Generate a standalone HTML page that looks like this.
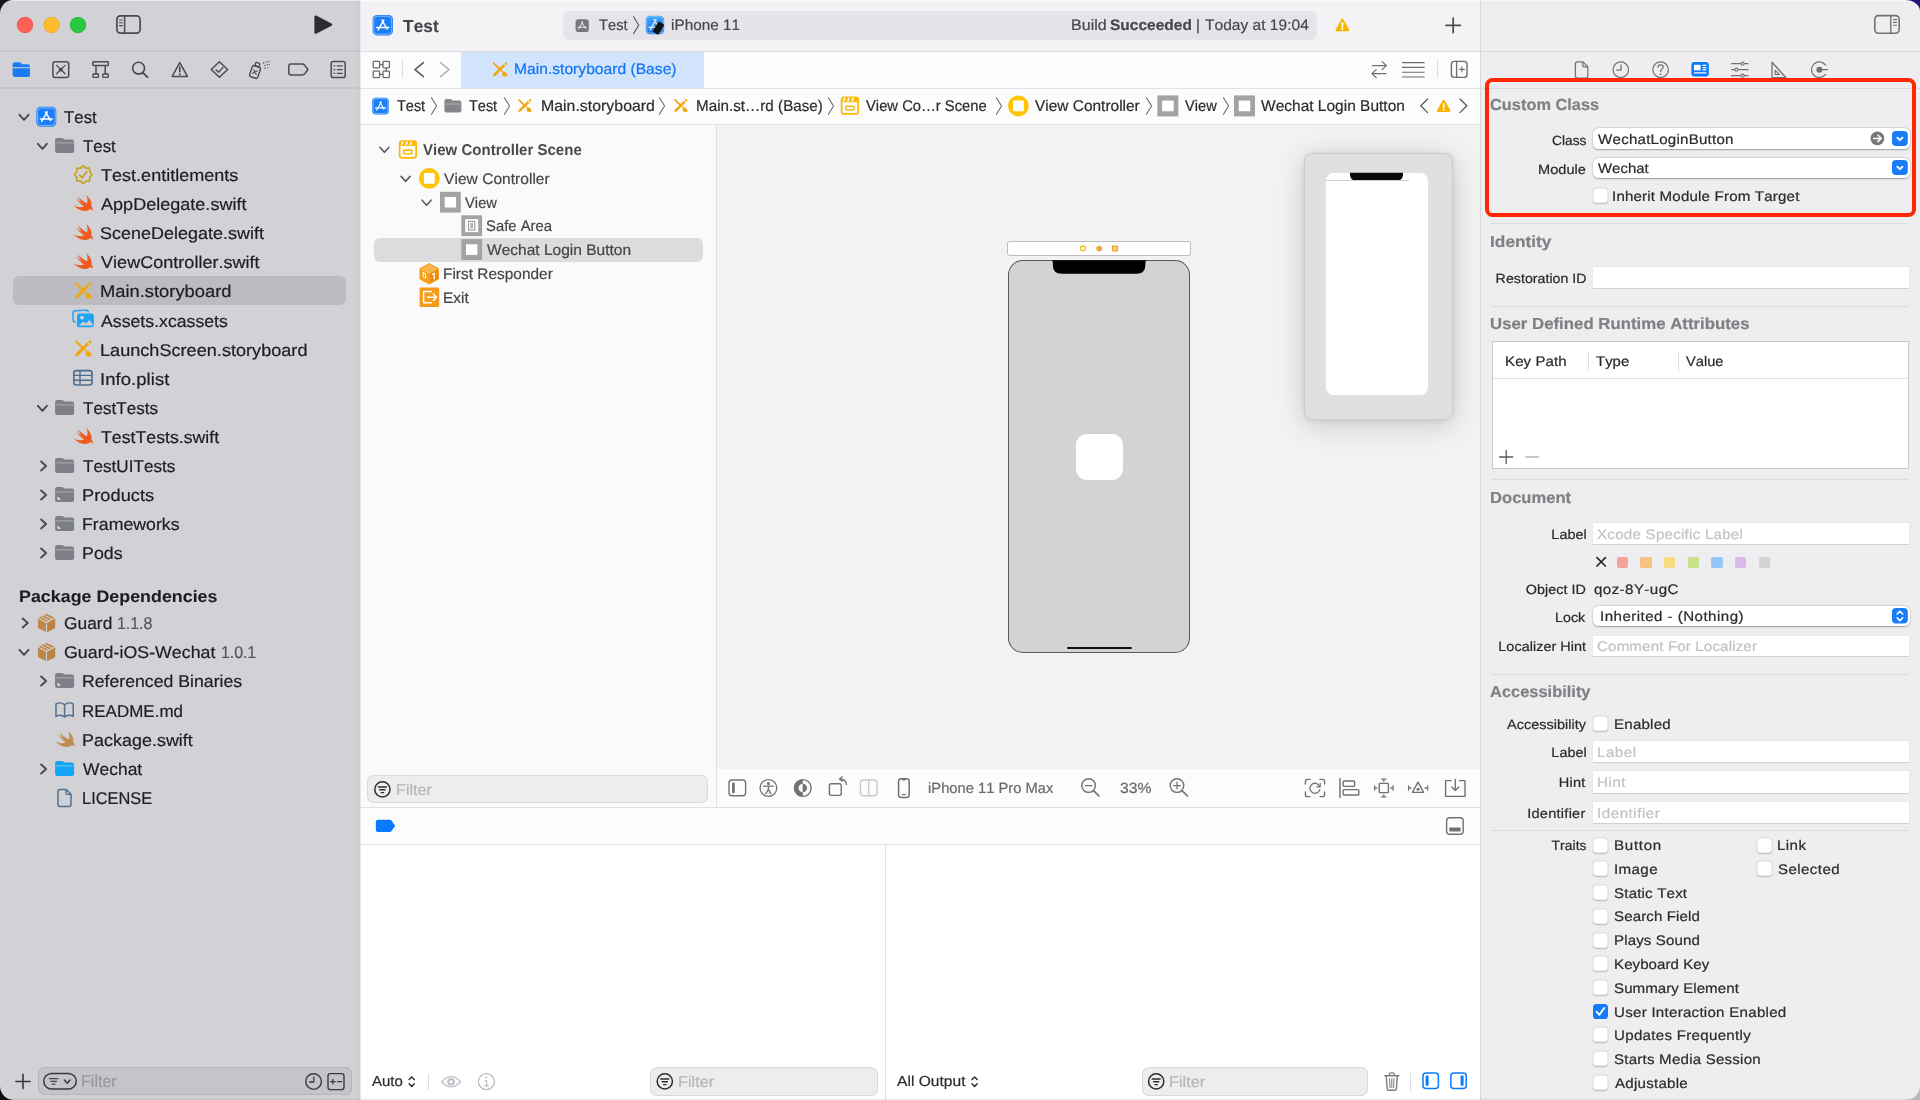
<!DOCTYPE html>
<html lang="en"><head><meta charset="utf-8"><title>Test — Main.storyboard</title>
<style>
html,body{margin:0;padding:0;}
body{width:1920px;height:1100px;overflow:hidden;position:relative;background:#fff;font-family:"Liberation Sans", sans-serif;}
#win{position:absolute;left:0;top:0;width:1920px;height:1100px;overflow:hidden;}
#win div,#win svg,#win span,.g{position:absolute;}
.g{left:0;top:0;width:0;height:0;}
#win svg{overflow:visible;}
.t{white-space:pre;font-kerning:none;height:40px;line-height:40px;transform-origin:0 50%;-webkit-text-stroke:0.2px currentColor;}
.r{transform-origin:100% 50%;}
.txl{left:0;top:0;width:1920px;height:1100px;will-change:transform;}
</style></head><body><div id="win">
<div id="chrome" class="g" aria-label="Window panels">
<div style="left:0px;top:0px;width:360px;height:1100px;background:#d2d1d6;"></div>
<div style="left:0px;top:50px;width:360px;height:1.7px;background:#c6c5ca;"></div>
<div style="left:0px;top:87.4px;width:360px;height:1.7px;background:#c6c5ca;"></div>
<div style="left:356px;top:0px;width:3px;height:1100px;background:linear-gradient(90deg,rgba(0,0,0,0),rgba(0,0,0,0.03));"></div>
<div style="left:359px;top:0px;width:1px;height:1100px;background:#cecdd2;"></div>
<div style="left:360px;top:0px;width:1px;height:1100px;background:#e6e5e9;"></div>
<div style="left:361px;top:0px;width:1119px;height:51px;background:#f3f2f5;"></div>
<div style="left:361px;top:51px;width:1119px;height:1px;background:#dddce0;"></div>
<div style="left:361px;top:52px;width:1119px;height:36px;background:#fcfcfc;"></div>
<div style="left:361px;top:88px;width:1119px;height:1px;background:#e2e2e4;"></div>
<div style="left:361px;top:89px;width:1119px;height:35px;background:#fcfcfc;"></div>
<div style="left:361px;top:124px;width:1119px;height:1px;background:#e2e2e4;"></div>
<div style="left:361px;top:125px;width:355px;height:682px;background:#fafafa;"></div>
<div style="left:716px;top:125px;width:1px;height:682px;background:#e0e0e2;"></div>
<div style="left:717px;top:125px;width:763px;height:643.5px;background:#f2f2f2;"></div>
<div style="left:717px;top:768.5px;width:763px;height:38.5px;background:#fcfcfc;"></div>
<div style="left:361px;top:807px;width:1119px;height:1px;background:#e0e0e2;"></div>
<div style="left:361px;top:808px;width:1119px;height:36px;background:#fcfcfc;"></div>
<div style="left:361px;top:844px;width:1119px;height:1px;background:#e0e0e2;"></div>
<div style="left:361px;top:845px;width:1119px;height:255px;background:#ffffff;"></div>
<div style="left:885px;top:845px;width:1px;height:255px;background:#e0e0e2;"></div>
<div style="left:1480px;top:0px;width:440px;height:1100px;background:#eeeef0;"></div>
<div style="left:1480px;top:0px;width:1px;height:1100px;background:#d6d6d9;"></div>
<div style="left:1481px;top:51px;width:439px;height:1px;background:#d9d9dc;"></div>
<div style="left:1481px;top:88px;width:439px;height:1px;background:#dadadd;"></div>
</div>
<aside id="navigator" class="g" aria-label="Project navigator">
<svg style="left:14px;top:14px" width="76" height="22" viewBox="14 14 76 22"><circle cx="25" cy="25" r="8" fill="#ff5f57"/><circle cx="25" cy="25" r="7.75" fill="none" stroke="#e0443e" stroke-width="0.5"/><circle cx="51.6" cy="25" r="8" fill="#febc2e"/><circle cx="51.6" cy="25" r="7.75" fill="none" stroke="#dea123" stroke-width="0.5"/><circle cx="78" cy="25" r="8" fill="#28c840"/><circle cx="78" cy="25" r="7.75" fill="none" stroke="#1aab29" stroke-width="0.5"/></svg>
<svg style="left:114px;top:13px" width="29" height="23" viewBox="114 13 29 23"><rect x="116.9" y="15.9" width="23.2" height="17.2" rx="3.6" fill="none" stroke="#4b4b4f" stroke-width="1.7"/><path d="M124.6 16 V33" stroke="#4b4b4f" stroke-width="1.5"/><path d="M119.4 20 h3 M119.4 22.8 h3 M119.4 25.6 h3" stroke="#4b4b4f" stroke-width="1.1" stroke-linecap="round"/></svg>
<svg style="left:312px;top:13px" width="23" height="23" viewBox="312 13 23 23"><path d="M315.6 16.6 L331 24.6 L315.6 32.6 Z" fill="#2d2d30" stroke="#2d2d30" stroke-width="2.4" stroke-linejoin="round"/></svg>
<svg style="left:10px;top:59px" width="23" height="21" viewBox="10 59 23 21"><path d="M12.6 64.4 q0 -2.2 2.2 -2.2 h4.2 q1.1 0 1.9 .8 l1.2 1.2 h5.7 q2.2 0 2.2 2.2 v0.8 h-17.4 z" fill="#1a7bf4"/><path d="M12.6 68.2 h17.4 v6.6 q0 2.2 -2.2 2.2 h-13 q-2.2 0 -2.2 -2.2 z" fill="#1a7bf4"/></svg>
<svg style="left:50px;top:59px" width="22" height="22" viewBox="50 59 22 22"><rect x="52.9" y="61.7" width="15.8" height="15.8" rx="2.2" fill="none" stroke="#4b4b4f" stroke-width="1.5"/><path d="M56.6 65.4 l8.4 8.4 M65 65.4 l-8.4 8.4" stroke="#4b4b4f" stroke-width="1.3" stroke-linecap="round"/><circle cx="60.8" cy="69.6" r="1.9" fill="#4b4b4f"/></svg>
<svg style="left:90px;top:59px" width="22" height="22" viewBox="90 59 22 22"><rect x="92.8" y="61.8" width="15.6" height="3.6" rx="0.8" fill="none" stroke="#4b4b4f" stroke-width="1.5"/><path d="M96 65.6 V74 M105.2 65.6 V74" stroke="#4b4b4f" stroke-width="1.5"/><rect x="93" y="74" width="5.4" height="3.4" rx="0.6" fill="none" stroke="#4b4b4f" stroke-width="1.4"/><rect x="102.8" y="74" width="5.4" height="3.4" rx="0.6" fill="none" stroke="#4b4b4f" stroke-width="1.4"/></svg>
<svg style="left:130px;top:59px" width="21" height="21" viewBox="130 59 21 21"><circle cx="138.6" cy="68.2" r="5.9" fill="none" stroke="#4b4b4f" stroke-width="1.6"/><path d="M143 72.8 L147.4 77.2" stroke="#4b4b4f" stroke-width="1.9" stroke-linecap="round"/></svg>
<svg style="left:169px;top:59px" width="22" height="21" viewBox="169 59 22 21"><path d="M179.8 62.6 L187.4 76.4 H172.2 Z" fill="none" stroke="#4b4b4f" stroke-width="1.5" stroke-linejoin="round"/><path d="M179.8 67 V71.8" stroke="#4b4b4f" stroke-width="1.6" stroke-linecap="round"/><circle cx="179.8" cy="74.2" r="0.95" fill="#4b4b4f"/></svg>
<svg style="left:208px;top:59px" width="23" height="22" viewBox="208 59 23 22"><path d="M219.4 61.8 L227.6 69.5 L219.4 77.2 L211.2 69.5 Z" fill="none" stroke="#4b4b4f" stroke-width="1.5" stroke-linejoin="round"/><path d="M216 69.8 L218.6 72.2 L223 67.4" fill="none" stroke="#4b4b4f" stroke-width="1.4" stroke-linecap="round" stroke-linejoin="round"/></svg>
<svg style="left:246px;top:58px" width="26" height="23" viewBox="246 58 26 23"><g transform="rotate(18 256 70)"><rect x="251.4" y="66.4" width="8.6" height="11.6" rx="1.8" fill="none" stroke="#4b4b4f" stroke-width="1.4"/><rect x="253.6" y="62.6" width="4.2" height="3.6" rx="0.8" fill="none" stroke="#4b4b4f" stroke-width="1.3"/><path d="M253.8 70.4 l3.8 3.8 M257.6 70.4 l-3.8 3.8" stroke="#4b4b4f" stroke-width="1.1" stroke-linecap="round"/></g><g fill="#4b4b4f"><circle cx="263.6" cy="63" r=".7"/><circle cx="266.2" cy="62" r=".7"/><circle cx="268.8" cy="61.4" r=".7"/><circle cx="264.6" cy="65.6" r=".7"/><circle cx="267.2" cy="64.8" r=".7"/><circle cx="269.4" cy="64.4" r=".6"/><circle cx="265.2" cy="68.2" r=".7"/><circle cx="267.8" cy="67.8" r=".6"/></g></svg>
<svg style="left:286px;top:61px" width="25" height="17" viewBox="286 61 25 17"><path d="M291 64 H302.4 Q303.6 64 304.4 64.9 L307.6 69 Q308 69.5 307.6 70 L304.4 74.1 Q303.6 75 302.4 75 H291 Q288.8 75 288.8 72.8 V66.2 Q288.8 64 291 64 Z" fill="none" stroke="#4b4b4f" stroke-width="1.5" stroke-linejoin="round"/></svg>
<svg style="left:328px;top:59px" width="20" height="22" viewBox="328 59 20 22"><rect x="331.2" y="61.6" width="14" height="16" rx="2.2" fill="none" stroke="#4b4b4f" stroke-width="1.5"/><path d="M337.2 65.8 h5 M337.2 69.6 h5 M337.2 73.4 h5" stroke="#4b4b4f" stroke-width="1.2" stroke-linecap="round"/><path d="M334 65.8 h.8 M334 69.6 h.8 M334 73.4 h.8" stroke="#4b4b4f" stroke-width="1.2" stroke-linecap="round"/></svg>
<div style="left:13px;top:276px;width:333px;height:29px;background:#bcbbc0;border-radius:6px;"></div>
<svg style="left:16px;top:108.8px" width="16" height="16" viewBox="16 108.8 16 16"><path d="M19.5 114.6 L24.0 119.6 L28.5 114.6" fill="none" stroke="#4a4a4e" stroke-width="1.9" stroke-linecap="round" stroke-linejoin="round"/></svg>
<svg style="left:34px;top:104.8px" width="24" height="24" viewBox="34 104.8 24 24"><rect x="36.3" y="106.6" width="20" height="20" rx="4.5" fill="#1c7ef6"/><rect x="37.5" y="107.8" width="17.6" height="17.6" rx="3.5" fill="none" stroke="#8cc0ff" stroke-width="0.9"/><g stroke="#fff" stroke-width="1.4" stroke-linecap="round" fill="none"><path d="M45.5 111.6 L50.5 120.39999999999999"/><path d="M47.3 111.6 L41.699999999999996 121.19999999999999"/><path d="M40.3 118.8 L52.3 118.8"/></g></svg>
<svg style="left:34px;top:137.9px" width="16" height="16" viewBox="34 137.9 16 16"><path d="M37.9 143.70000000000002 L42.4 148.70000000000002 L46.9 143.70000000000002" fill="none" stroke="#4a4a4e" stroke-width="1.9" stroke-linecap="round" stroke-linejoin="round"/></svg>
<svg style="left:53px;top:135.9px" width="23" height="20" viewBox="53 135.9 23 20"><path d="M55.1 139.8 q0 -2 2 -2 h4.54 q1.1 0 1.8 .7 l.9 .8 h7.76 q2 0 2 2 v9.5 q0 2 -2 2 h-15 q-2 0 -2 -2 z" fill="#7c7f88"/><path d="M55.7 142.8 h17.8" stroke="#b1b3ba" stroke-width=".9"/></svg>
<svg style="left:71px;top:162.9px" width="24" height="24" viewBox="71 162.9 24 24"><path d="M82.07 166.69 Q83.30 164.82 84.53 166.69 Q85.76 168.55 87.95 168.10 Q90.14 167.66 89.70 169.85 Q89.25 172.04 91.11 173.27 Q92.98 174.50 91.11 175.73 Q89.25 176.96 89.70 179.15 Q90.14 181.34 87.95 180.90 Q85.76 180.45 84.53 182.31 Q83.30 184.18 82.07 182.31 Q80.84 180.45 78.65 180.90 Q76.46 181.34 76.90 179.15 Q77.35 176.96 75.49 175.73 Q73.62 174.50 75.49 173.27 Q77.35 172.04 76.90 169.85 Q76.46 167.66 78.65 168.10 Q80.84 168.55 82.07 166.69 Z" fill="none" stroke="#c9a21c" stroke-width="1.7" stroke-linejoin="round"/><path d="M79.7 175.1 L82.3 177.7 L86.89999999999999 171.3" fill="none" stroke="#c9a21c" stroke-width="1.7" stroke-linecap="round" stroke-linejoin="round"/></svg>
<svg style="left:71px;top:192.0px" width="24" height="24" viewBox="71 192.0 24 24"><path d="M 86.20 195.00 C 89.50 198.00 92.50 202.50 91.30 206.30 C 92.50 207.80 93.20 209.60 92.80 210.80 C 92.00 209.60 91.20 209.00 90.20 209.20 C 87.50 211.30 82.50 211.50 79.50 209.80 C 77.20 208.60 75.20 207.20 73.80 205.60 C 77.00 207.40 81.00 207.80 84.00 206.60 C 80.50 204.00 77.80 201.00 75.80 198.00 C 78.00 200.20 80.50 202.20 82.80 203.80 C 80.60 201.60 79.00 199.00 78.00 196.40 C 80.50 199.00 83.50 201.60 87.00 203.40 C 88.00 200.50 87.50 197.50 86.20 195.00 Z" fill="#f05a1e"/></svg>
<svg style="left:71px;top:221.1px" width="24" height="24" viewBox="71 221.1 24 24"><path d="M 86.20 224.10 C 89.50 227.10 92.50 231.60 91.30 235.40 C 92.50 236.90 93.20 238.70 92.80 239.90 C 92.00 238.70 91.20 238.10 90.20 238.30 C 87.50 240.40 82.50 240.60 79.50 238.90 C 77.20 237.70 75.20 236.30 73.80 234.70 C 77.00 236.50 81.00 236.90 84.00 235.70 C 80.50 233.10 77.80 230.10 75.80 227.10 C 78.00 229.30 80.50 231.30 82.80 232.90 C 80.60 230.70 79.00 228.10 78.00 225.50 C 80.50 228.10 83.50 230.70 87.00 232.50 C 88.00 229.60 87.50 226.60 86.20 224.10 Z" fill="#f05a1e"/></svg>
<svg style="left:71px;top:250.10000000000002px" width="24" height="24" viewBox="71 250.10000000000002 24 24"><path d="M 86.20 253.10 C 89.50 256.10 92.50 260.60 91.30 264.40 C 92.50 265.90 93.20 267.70 92.80 268.90 C 92.00 267.70 91.20 267.10 90.20 267.30 C 87.50 269.40 82.50 269.60 79.50 267.90 C 77.20 266.70 75.20 265.30 73.80 263.70 C 77.00 265.50 81.00 265.90 84.00 264.70 C 80.50 262.10 77.80 259.10 75.80 256.10 C 78.00 258.30 80.50 260.30 82.80 261.90 C 80.60 259.70 79.00 257.10 78.00 254.50 C 80.50 257.10 83.50 259.70 87.00 261.50 C 88.00 258.60 87.50 255.60 86.20 253.10 Z" fill="#f05a1e"/></svg>
<svg style="left:72px;top:280.2px" width="22" height="22" viewBox="72 280.2 22 22"><path d="M75.00 298.80 L75.70 295.90 L87.00 284.60 L89.20 286.80 L77.90 298.10 Z" fill="#f0a812"/><path d="M87.90 283.70 L88.80 282.80 Q89.70 282.20 90.50 282.90 L91.10 283.50 Q91.70 284.30 91.10 285.10 L90.20 286.00 Z" fill="#f0a812"/><path d="M74.90 282.90 Q75.40 282.00 76.50 282.70 L84.10 289.90 L82.40 291.60 L75.20 284.20 Q74.50 283.50 74.90 282.90 Z" fill="#f0a812"/><path d="M84.70 291.80 L86.30 293.20" stroke="#f0a812" stroke-width="1.9" stroke-linecap="butt"/><path d="M85.60 295.20 C85.80 293.20 88.00 292.70 89.50 293.80 C91.00 295.00 91.10 296.90 92.30 297.50 C90.30 299.20 87.50 299.10 86.30 297.90 C85.50 297.10 85.40 296.00 85.60 295.20 Z" fill="#f0a812"/></svg>
<svg style="left:70px;top:308.3px" width="27" height="23" viewBox="70 308.3 27 23"><rect x="73" y="310.90000000000003" width="15.6" height="11.4" rx="2.6" fill="none" stroke="#1ea4f2" stroke-width="1.5" transform="rotate(-3 80 316.3)"/><rect x="76.3" y="313.1" width="18.2" height="15.2" rx="3.2" fill="#1ea4f2" stroke="#d2d1d6" stroke-width="1.3"/><circle cx="82" cy="317.90000000000003" r="1.9" fill="#d2d1d6"/><path d="M79 325.90000000000003 l4.2 -4 l2.6 2.2 l3.4 -3.8 l3.6 4.2 v1.4 z" fill="#d2d1d6"/></svg>
<svg style="left:72px;top:338.4px" width="22" height="22" viewBox="72 338.4 22 22"><path d="M75.00 357.00 L75.70 354.10 L87.00 342.80 L89.20 345.00 L77.90 356.30 Z" fill="#f0a812"/><path d="M87.90 341.90 L88.80 341.00 Q89.70 340.40 90.50 341.10 L91.10 341.70 Q91.70 342.50 91.10 343.30 L90.20 344.20 Z" fill="#f0a812"/><path d="M74.90 341.10 Q75.40 340.20 76.50 340.90 L84.10 348.10 L82.40 349.80 L75.20 342.40 Q74.50 341.70 74.90 341.10 Z" fill="#f0a812"/><path d="M84.70 350.00 L86.30 351.40" stroke="#f0a812" stroke-width="1.9" stroke-linecap="butt"/><path d="M85.60 353.40 C85.80 351.40 88.00 350.90 89.50 352.00 C91.00 353.20 91.10 355.10 92.30 355.70 C90.30 357.40 87.50 357.30 86.30 356.10 C85.50 355.30 85.40 354.20 85.60 353.40 Z" fill="#f0a812"/></svg>
<svg style="left:71px;top:368.4px" width="24" height="20" viewBox="71 368.4 24 20"><rect x="73.8" y="371.0" width="18.2" height="14.4" rx="2.4" fill="none" stroke="#4d6d8c" stroke-width="1.6"/><path d="M73.8 375.79999999999995 h18.2 M73.8 380.59999999999997 h18.2 M80 371.0 v14.4" stroke="#4d6d8c" stroke-width="1.4"/></svg>
<svg style="left:34px;top:399.5px" width="16" height="16" viewBox="34 399.5 16 16"><path d="M37.9 405.3 L42.4 410.3 L46.9 405.3" fill="none" stroke="#4a4a4e" stroke-width="1.9" stroke-linecap="round" stroke-linejoin="round"/></svg>
<svg style="left:53px;top:397.5px" width="23" height="20" viewBox="53 397.5 23 20"><path d="M55.1 401.4 q0 -2 2 -2 h4.54 q1.1 0 1.8 .7 l.9 .8 h7.76 q2 0 2 2 v9.5 q0 2 -2 2 h-15 q-2 0 -2 -2 z" fill="#7c7f88"/><path d="M55.7 404.4 h17.8" stroke="#b1b3ba" stroke-width=".9"/></svg>
<svg style="left:71px;top:424.6px" width="24" height="24" viewBox="71 424.6 24 24"><path d="M 86.20 427.60 C 89.50 430.60 92.50 435.10 91.30 438.90 C 92.50 440.40 93.20 442.20 92.80 443.40 C 92.00 442.20 91.20 441.60 90.20 441.80 C 87.50 443.90 82.50 444.10 79.50 442.40 C 77.20 441.20 75.20 439.80 73.80 438.20 C 77.00 440.00 81.00 440.40 84.00 439.20 C 80.50 436.60 77.80 433.60 75.80 430.60 C 78.00 432.80 80.50 434.80 82.80 436.40 C 80.60 434.20 79.00 431.60 78.00 429.00 C 80.50 431.60 83.50 434.20 87.00 436.00 C 88.00 433.10 87.50 430.10 86.20 427.60 Z" fill="#f05a1e"/></svg>
<svg style="left:36px;top:457.6px" width="14" height="16" viewBox="36 457.6 14 16"><path d="M41.1 461.1 L46.1 465.6 L41.1 470.1" fill="none" stroke="#4a4a4e" stroke-width="1.9" stroke-linecap="round" stroke-linejoin="round"/></svg>
<svg style="left:53px;top:455.6px" width="23" height="20" viewBox="53 455.6 23 20"><path d="M55.1 459.5 q0 -2 2 -2 h4.54 q1.1 0 1.8 .7 l.9 .8 h7.76 q2 0 2 2 v9.5 q0 2 -2 2 h-15 q-2 0 -2 -2 z" fill="#7c7f88"/><path d="M55.7 462.5 h17.8" stroke="#b1b3ba" stroke-width=".9"/></svg>
<svg style="left:36px;top:486.7px" width="14" height="16" viewBox="36 486.7 14 16"><path d="M41.1 490.2 L46.1 494.7 L41.1 499.2" fill="none" stroke="#4a4a4e" stroke-width="1.9" stroke-linecap="round" stroke-linejoin="round"/></svg>
<svg style="left:53px;top:484.7px" width="23" height="20" viewBox="53 484.7 23 20"><path d="M55.1 488.59999999999997 q0 -2 2 -2 h4.54 q1.1 0 1.8 .7 l.9 .8 h7.76 q2 0 2 2 v9.5 q0 2 -2 2 h-15 q-2 0 -2 -2 z" fill="#7c7f88"/><path d="M55.7 491.59999999999997 h17.8" stroke="#b1b3ba" stroke-width=".9"/><path d="M57.5 499.4 v-3.4 l3.4 3.4 z" fill="#e8e8ec"/></svg>
<svg style="left:36px;top:515.8px" width="14" height="16" viewBox="36 515.8 14 16"><path d="M41.1 519.3 L46.1 523.8 L41.1 528.3" fill="none" stroke="#4a4a4e" stroke-width="1.9" stroke-linecap="round" stroke-linejoin="round"/></svg>
<svg style="left:53px;top:513.8px" width="23" height="20" viewBox="53 513.8 23 20"><path d="M55.1 517.6999999999999 q0 -2 2 -2 h4.54 q1.1 0 1.8 .7 l.9 .8 h7.76 q2 0 2 2 v9.5 q0 2 -2 2 h-15 q-2 0 -2 -2 z" fill="#7c7f88"/><path d="M55.7 520.6999999999999 h17.8" stroke="#b1b3ba" stroke-width=".9"/><path d="M57.5 528.4999999999999 v-3.4 l3.4 3.4 z" fill="#e8e8ec"/></svg>
<svg style="left:36px;top:544.9px" width="14" height="16" viewBox="36 544.9 14 16"><path d="M41.1 548.4 L46.1 552.9 L41.1 557.4" fill="none" stroke="#4a4a4e" stroke-width="1.9" stroke-linecap="round" stroke-linejoin="round"/></svg>
<svg style="left:53px;top:542.9px" width="23" height="20" viewBox="53 542.9 23 20"><path d="M55.1 546.8 q0 -2 2 -2 h4.54 q1.1 0 1.8 .7 l.9 .8 h7.76 q2 0 2 2 v9.5 q0 2 -2 2 h-15 q-2 0 -2 -2 z" fill="#7c7f88"/><path d="M55.7 549.8 h17.8" stroke="#b1b3ba" stroke-width=".9"/></svg>
<svg style="left:16px;top:615.0px" width="16" height="16" viewBox="16 615.0 16 16"><path d="M22.7 618.5 L27.7 623.0 L22.7 627.5" fill="none" stroke="#4a4a4e" stroke-width="1.9" stroke-linecap="round" stroke-linejoin="round"/></svg>
<svg style="left:35px;top:610.9px" width="23" height="24" viewBox="35 610.9 23 24"><path d="M46.5 613.6 L55.1 617.9 V627.8 L46.5 632.1999999999999 L37.9 627.8 V617.9 Z" fill="#bf8848"/><path d="M46.6 622.3 V632.1999999999999 L55.1 627.8 V617.9 Z" fill="#b98243"/><path d="M37.9 617.9 L46.5 622.1999999999999 L55.1 617.9 M46.5 622.1999999999999 V632.1999999999999" fill="none" stroke="#d2d1d6" stroke-width="1.1"/><path d="M40.9 616.4 L49.5 620.6999999999999 M43.9 614.9 L52.5 619.1999999999999" fill="none" stroke="#d2d1d6" stroke-width="1"/></svg>
<svg style="left:16px;top:644.1px" width="16" height="16" viewBox="16 644.1 16 16"><path d="M19.5 649.9 L24.0 654.9 L28.5 649.9" fill="none" stroke="#4a4a4e" stroke-width="1.9" stroke-linecap="round" stroke-linejoin="round"/></svg>
<svg style="left:35px;top:640.0px" width="23" height="24" viewBox="35 640.0 23 24"><path d="M46.5 642.7 L55.1 647.0 V656.9 L46.5 661.3 L37.9 656.9 V647.0 Z" fill="#bf8848"/><path d="M46.6 651.4 V661.3 L55.1 656.9 V647.0 Z" fill="#b98243"/><path d="M37.9 647.0 L46.5 651.3 L55.1 647.0 M46.5 651.3 V661.3" fill="none" stroke="#d2d1d6" stroke-width="1.1"/><path d="M40.9 645.5 L49.5 649.8 M43.9 644.0 L52.5 648.3" fill="none" stroke="#d2d1d6" stroke-width="1"/></svg>
<svg style="left:36px;top:673.2px" width="14" height="16" viewBox="36 673.2 14 16"><path d="M41.1 676.7 L46.1 681.2 L41.1 685.7" fill="none" stroke="#4a4a4e" stroke-width="1.9" stroke-linecap="round" stroke-linejoin="round"/></svg>
<svg style="left:53px;top:671.2px" width="23" height="20" viewBox="53 671.2 23 20"><path d="M55.1 675.1 q0 -2 2 -2 h4.54 q1.1 0 1.8 .7 l.9 .8 h7.76 q2 0 2 2 v9.5 q0 2 -2 2 h-15 q-2 0 -2 -2 z" fill="#7c7f88"/><path d="M55.7 678.1 h17.8" stroke="#b1b3ba" stroke-width=".9"/><path d="M57.5 685.9 v-3.4 l3.4 3.4 z" fill="#e8e8ec"/></svg>
<svg style="left:53px;top:700.4px" width="23" height="20" viewBox="53 700.4 23 20"><path d="M64.6 705.1999999999999 C62.4 703.0 58.6 702.8 56 704.1999999999999 V716.8 C58.6 715.4 62.4 715.6 64.6 717.4 C66.8 715.6 70.6 715.4 73.2 716.8 V704.1999999999999 C70.6 702.8 66.8 703.0 64.6 705.1999999999999 Z M64.6 705.1999999999999 V717.4" fill="none" stroke="#54708c" stroke-width="1.5" stroke-linejoin="round"/></svg>
<svg style="left:53px;top:727.5px" width="24" height="24" viewBox="53 727.5 24 24"><path d="M 68.00 730.50 C 71.30 733.50 74.30 738.00 73.10 741.80 C 74.30 743.30 75.00 745.10 74.60 746.30 C 73.80 745.10 73.00 744.50 72.00 744.70 C 69.30 746.80 64.30 747.00 61.30 745.30 C 59.00 744.10 57.00 742.70 55.60 741.10 C 58.80 742.90 62.80 743.30 65.80 742.10 C 62.30 739.50 59.60 736.50 57.60 733.50 C 59.80 735.70 62.30 737.70 64.60 739.30 C 62.40 737.10 60.80 734.50 59.80 731.90 C 62.30 734.50 65.30 737.10 68.80 738.90 C 69.80 736.00 69.30 733.00 68.00 730.50 Z" fill="#c08b50"/></svg>
<svg style="left:36px;top:760.6px" width="14" height="16" viewBox="36 760.6 14 16"><path d="M41.1 764.1 L46.1 768.6 L41.1 773.1" fill="none" stroke="#4a4a4e" stroke-width="1.9" stroke-linecap="round" stroke-linejoin="round"/></svg>
<svg style="left:53px;top:758.6px" width="23" height="20" viewBox="53 758.6 23 20"><path d="M55.1 762.5 q0 -2 2 -2 h4.54 q1.1 0 1.8 .7 l.9 .8 h7.76 q2 0 2 2 v9.5 q0 2 -2 2 h-15 q-2 0 -2 -2 z" fill="#12a5f5"/><path d="M55.7 765.5 h17.8" stroke="#7fd0fb" stroke-width=".9"/></svg>
<svg style="left:55px;top:786.7px" width="19" height="22" viewBox="55 786.7 19 22"><path d="M60 789.3000000000001 H66.4 L71 793.9000000000001 V804.1 Q71 806.1 69 806.1 H60 Q58 806.1 58 804.1 V791.3000000000001 Q58 789.3000000000001 60 789.3000000000001 Z" fill="none" stroke="#54708c" stroke-width="1.5" stroke-linejoin="round"/><path d="M66 789.5 V792.7 Q66 794.1 67.4 794.1 H70.8" fill="none" stroke="#54708c" stroke-width="1.4"/></svg>
<svg style="left:13px;top:1072px" width="20" height="20" viewBox="13 1072 20 20"><path d="M23 1074.4 V1088.6 M15.9 1081.5 H30.1" stroke="#3a3a3e" stroke-width="1.6" stroke-linecap="round"/></svg>
<div style="left:38px;top:1067px;width:314px;height:28px;background:#c5c4c9;border-radius:7px;box-shadow:inset 0 0 0 1px #b5b4b9;"></div>
<svg style="left:41px;top:1071px" width="38" height="20" viewBox="41 1071 38 20"><rect x="43.8" y="1073.4" width="32.4" height="15.6" rx="7.8" fill="none" stroke="#3a3a3e" stroke-width="1.5"/><path d="M49.4 1078.6 h8.4 M50.8 1081.4 h5.6 M52.2 1084.2 h2.8" stroke="#4a4a4e" stroke-width="1.3" stroke-linecap="round"/><path d="M64.41 1080.05 L67.2 1083.1499999999999 L69.99000000000001 1080.05" fill="none" stroke="#3a3a3e" stroke-width="1.5" stroke-linecap="round" stroke-linejoin="round"/></svg>
<svg style="left:303px;top:1071px" width="22" height="22" viewBox="303 1071 22 22"><circle cx="313.6" cy="1081.6" r="7.8" fill="none" stroke="#3a3a3e" stroke-width="1.4"/><path d="M313.8 1077 V1082 H309.6" fill="none" stroke="#3a3a3e" stroke-width="1.3" stroke-linecap="round" stroke-linejoin="round"/></svg>
<svg style="left:325px;top:1071px" width="22" height="22" viewBox="325 1071 22 22"><rect x="328" y="1073.6" width="16" height="16" rx="2.4" fill="none" stroke="#3a3a3e" stroke-width="1.4"/><path d="M330.6 1081.6 h4.6 M332.9 1079.3 v4.6 M337.6 1081.6 h4" stroke="#3a3a3e" stroke-width="1.2" stroke-linecap="round"/></svg>
<div class="txl">
<span class="t" style="top:97.75px;font-size:17px;color:#1e1e20;transform:skewX(0.2deg) scaleX(0.9891);left:64.22px;">Test</span>
<span class="t" style="top:126.75px;font-size:17px;color:#1e1e20;transform:skewX(0.2deg) scaleX(0.9891);left:82.72px;">Test</span>
<span class="t" style="top:155.75px;font-size:17px;color:#1e1e20;transform:skewX(0.2deg) scaleX(1.0611);left:100.89px;">Test.entitlements</span>
<span class="t" style="top:184.75px;font-size:17px;color:#1e1e20;transform:skewX(0.2deg) scaleX(1.0616);left:101.26px;">AppDelegate.swift</span>
<span class="t" style="top:213.75px;font-size:17px;color:#1e1e20;transform:skewX(0.2deg) scaleX(1.0579);left:100.48px;">SceneDelegate.swift</span>
<span class="t" style="top:242.75px;font-size:17px;color:#1e1e20;transform:skewX(0.2deg) scaleX(1.0626);left:101.22px;">ViewController.swift</span>
<span class="t" style="top:271.75px;font-size:17px;color:#1e1e20;transform:skewX(0.2deg) scaleX(1.0787);left:99.80px;">Main.storyboard</span>
<span class="t" style="top:301.75px;font-size:17px;color:#1e1e20;transform:skewX(0.2deg) scaleX(1.0410);left:101.27px;">Assets.xcassets</span>
<span class="t" style="top:330.75px;font-size:17px;color:#1e1e20;transform:skewX(0.2deg) scaleX(1.0656);left:99.81px;">LaunchScreen.storyboard</span>
<span class="t" style="top:359.75px;font-size:17px;color:#1e1e20;transform:skewX(0.2deg) scaleX(1.0900);letter-spacing:0.034px;left:99.59px;">Info.plist</span>
<span class="t" style="top:388.75px;font-size:17px;color:#1e1e20;transform:skewX(0.2deg) scaleX(1.0051);left:82.72px;">TestTests</span>
<span class="t" style="top:417.75px;font-size:17px;color:#1e1e20;transform:skewX(0.2deg) scaleX(1.0422);left:100.90px;">TestTests.swift</span>
<span class="t" style="top:446.75px;font-size:17px;color:#1e1e20;transform:skewX(0.2deg) scaleX(1.0074);left:82.72px;">TestUITests</span>
<span class="t" style="top:475.75px;font-size:17px;color:#1e1e20;transform:skewX(0.2deg) scaleX(1.0756);left:81.60px;">Products</span>
<span class="t" style="top:504.75px;font-size:17px;color:#1e1e20;transform:skewX(0.2deg) scaleX(1.0437);left:81.64px;">Frameworks</span>
<span class="t" style="top:533.75px;font-size:17px;color:#1e1e20;transform:skewX(0.2deg) scaleX(1.0479);left:81.64px;">Pods</span>
<span class="t" style="top:576.75px;font-size:16.6px;color:#1d1d1f;font-weight:700;-webkit-text-stroke-width:0.08px;transform:skewX(0.2deg) scaleX(1.0758);left:19.31px;">Package Dependencies</span>
<span class="t" style="top:603.75px;font-size:17px;color:#1e1e20;transform:skewX(0.2deg) scaleX(1.0221);left:63.73px;">Guard</span>
<span class="t" style="top:603.75px;font-size:17px;color:#56565a;transform:skewX(0.2deg) scaleX(0.9400);letter-spacing:-0.061px;left:116.68px;">1.1.8</span>
<span class="t" style="top:632.75px;font-size:17px;color:#1e1e20;transform:skewX(0.2deg) scaleX(1.0476);left:63.70px;">Guard-iOS-Wechat</span>
<span class="t" style="top:632.75px;font-size:17px;color:#56565a;transform:skewX(0.2deg) scaleX(0.9400);letter-spacing:-0.091px;left:221.08px;">1.0.1</span>
<span class="t" style="top:661.75px;font-size:17px;color:#1e1e20;transform:skewX(0.2deg) scaleX(1.0393);left:81.65px;">Referenced Binaries</span>
<span class="t" style="top:691.75px;font-size:17px;color:#1e1e20;transform:skewX(0.2deg) scaleX(0.9992);left:81.71px;">README.md</span>
<span class="t" style="top:720.75px;font-size:17px;color:#1e1e20;transform:skewX(0.2deg) scaleX(1.0565);left:81.63px;">Package.swift</span>
<span class="t" style="top:749.75px;font-size:17px;color:#1e1e20;transform:skewX(0.2deg) scaleX(1.0273);left:83.02px;">Wechat</span>
<span class="t" style="top:778.75px;font-size:17px;color:#1e1e20;transform:skewX(0.2deg) scaleX(0.9657);left:81.75px;">LICENSE</span>
<span class="t" style="top:1061.75px;font-size:17px;color:#98979c;transform:skewX(0.2deg) scaleX(0.9446);left:81.28px;">Filter</span>
</div>
</aside>
<main id="editor" class="g" aria-label="Interface Builder editor">
<svg style="left:370px;top:13px" width="25" height="25" viewBox="370 13 25 25"><rect x="372.6" y="15" width="20.4" height="20.4" rx="4.59" fill="#1c7ef6"/><rect x="373.824" y="16.224" width="17.951999999999998" height="17.951999999999998" rx="3.57" fill="none" stroke="#8cc0ff" stroke-width="0.918"/><g stroke="#fff" stroke-width="1.428" stroke-linecap="round" fill="none"><path d="M381.98400000000004 20.1 L387.084 29.076"/><path d="M383.82 20.1 L378.108 29.892"/><path d="M376.68 27.444 L388.92 27.444"/></g></svg>
<div style="left:563px;top:11px;width:754px;height:28.5px;background:#e5e4e8;border-radius:7px;"></div>
<svg style="left:573px;top:17px" width="18" height="18" viewBox="573 17 18 18"><rect x="575.6" y="19.2" width="13.2" height="12.8" rx="2.8" fill="#77777b"/><g stroke="#ecebee" stroke-width="1" stroke-linecap="round"><path d="M581.6 21.8 L585.6 28.6 M582.8 21.8 L578.6 29 M578 27.2 H586.4"/></g></svg>
<svg style="left:630px;top:16px" width="12" height="20" viewBox="630 16 12 20"><path d="M633.6 16.8 L638.8 25.2 L633.6 33.6" fill="none" stroke="#5e5e62" stroke-width="1.2" stroke-linecap="round" stroke-linejoin="round"/></svg>
<svg style="left:643px;top:14px" width="23" height="23" viewBox="643 14 23 23"><defs><linearGradient id="dvg" x1="0" y1="0" x2="0" y2="1"><stop offset="0" stop-color="#3da6f8"/><stop offset="1" stop-color="#1b72ea"/></linearGradient></defs><rect x="645.8" y="15.8" width="18.4" height="18.4" rx="4.2" fill="url(#dvg)"/><rect x="646.8" y="16.8" width="16.4" height="16.4" rx="3.4" fill="none" stroke="#8cc8ff" stroke-width=".8"/><g stroke="#cfe6ff" stroke-width="1.5" stroke-linecap="round" fill="none"><path d="M654.2 19.6 L659.4 28.8 M656 19.6 L650.2 29.6 M649 27.2 H661"/></g><g transform="rotate(32 658.4 28.2)"><rect x="655" y="22" width="6.8" height="12.2" rx="1.5" fill="#121214"/></g></svg>
<svg style="left:1333px;top:16px" width="19" height="18" viewBox="1333 16 19 18"><path d="M1342.3999999999999 19.8 L1348.2 30.200000000000003 H1336.6 Z" fill="#f7b500" stroke="#f7b500" stroke-width="2.2" stroke-linejoin="round"/><path d="M1342.3999999999999 22.952 V26.792" stroke="#fff" stroke-width="1.716" stroke-linecap="round"/><circle cx="1342.3999999999999" cy="29.096000000000004" r="0.9899999999999999" fill="#fff"/></svg>
<svg style="left:1443px;top:15px" width="20" height="20" viewBox="1443 15 20 20"><path d="M1453.2 18 V32.6 M1445.9 25.3 H1460.5" stroke="#4a4a4e" stroke-width="1.7" stroke-linecap="round"/></svg>
<svg style="left:370px;top:58px" width="22" height="22" viewBox="370 58 22 22"><g fill="none" stroke="#6c6c70" stroke-width="1.3"><rect x="373.2" y="61.4" width="6.4" height="6.4" rx=".8"/><rect x="383" y="61.4" width="6.4" height="6.4" rx=".8"/><rect x="373.2" y="71.2" width="6.4" height="6.4" rx=".8"/><rect x="383" y="71.2" width="6.4" height="6.4" rx=".8"/><path d="M379.6 64.6 H383 M386.2 67.8 V71.2 M379.6 74.4 H383"/></g></svg>
<div style="left:402px;top:60px;width:1px;height:18px;background:#dcdce0;"></div>
<svg style="left:411px;top:60px" width="16" height="19" viewBox="411 60 16 19"><path d="M423.4 62.6 L415 69.6 L423.4 76.6" fill="none" stroke="#58585c" stroke-width="1.5" stroke-linecap="round" stroke-linejoin="round"/></svg>
<svg style="left:437px;top:60px" width="16" height="19" viewBox="437 60 16 19"><path d="M440.6 62.6 L449 69.6 L440.6 76.6" fill="none" stroke="#b4b4b8" stroke-width="1.5" stroke-linecap="round" stroke-linejoin="round"/></svg>
<div style="left:461px;top:52px;width:243px;height:36px;background:#d2e4fc;"></div>
<svg style="left:490px;top:60px" width="20" height="20" viewBox="490 60 20 20"><path d="M492.86 76.61 L493.48 74.06 L503.42 64.11 L505.36 66.05 L495.42 75.99 Z" fill="#f0a812"/><path d="M504.22 63.32 L505.01 62.53 Q505.80 62.00 506.50 62.62 L507.03 63.14 Q507.56 63.85 507.03 64.55 L506.24 65.34 Z" fill="#f0a812"/><path d="M492.78 62.62 Q493.22 61.82 494.18 62.44 L500.87 68.78 L499.38 70.27 L493.04 63.76 Q492.42 63.14 492.78 62.62 Z" fill="#f0a812"/><path d="M501.40 70.45 L502.81 71.68" stroke="#f0a812" stroke-width="1.672" stroke-linecap="butt"/><path d="M502.19 73.44 C502.37 71.68 504.30 71.24 505.62 72.21 C506.94 73.26 507.03 74.94 508.09 75.46 C506.33 76.96 503.86 76.87 502.81 75.82 C502.10 75.11 502.02 74.14 502.19 73.44 Z" fill="#f0a812"/></svg>
<svg style="left:1368px;top:58px" width="22" height="22" viewBox="1368 58 22 22"><path d="M1372.4 65.6 H1386 M1382.2 61.6 L1386.4 65.6 L1382.2 69.6 M1386 73.6 H1372.4 M1376.2 69.6 L1372 73.6 L1376.2 77.6" fill="none" stroke="#6c6c70" stroke-width="1.2" stroke-linecap="round" stroke-linejoin="round"/></svg>
<svg style="left:1399px;top:59px" width="28" height="21" viewBox="1399 59 28 21"><path d="M1402 62.6 H1424.6 M1402 67.4 H1424.6 M1402 72.2 H1424.6 M1402 77 H1424.6" stroke="#6c6c70" stroke-width="1.1"/></svg>
<div style="left:1437px;top:60px;width:1px;height:18px;background:#dcdce0;"></div>
<svg style="left:1448px;top:58px" width="22" height="22" viewBox="1448 58 22 22"><rect x="1451.4" y="61.4" width="15.6" height="16" rx="2.8" fill="none" stroke="#6c6c70" stroke-width="1.4"/><path d="M1456.6 61.4 V77.4" stroke="#6c6c70" stroke-width="1.3"/><path d="M1459.4 69.4 h5 M1461.9 66.9 v5" stroke="#6c6c70" stroke-width="1.1" stroke-linecap="round"/></svg>
<svg style="left:370px;top:96px" width="21" height="21" viewBox="370 96 21 21"><rect x="372.2" y="97.8" width="16.6" height="16.6" rx="3.7350000000000003" fill="#1c7ef6"/><rect x="373.19599999999997" y="98.79599999999999" width="14.608" height="14.608" rx="2.9050000000000002" fill="none" stroke="#8cc0ff" stroke-width="0.7470000000000001"/><g stroke="#fff" stroke-width="1.162" stroke-linecap="round" fill="none"><path d="M379.836 101.94999999999999 L383.986 109.25399999999999"/><path d="M381.33 101.94999999999999 L376.682 109.91799999999999"/><path d="M375.52 107.92599999999999 L385.48 107.92599999999999"/></g></svg>
<svg style="left:428px;top:94.8px" width="12" height="22" viewBox="428 94.8 12 22"><path d="M431.4 97.6 L436.6 105.8 L431.4 114.0" fill="none" stroke="#6a6a6e" stroke-width="1.1" stroke-linecap="round" stroke-linejoin="round"/></svg>
<svg style="left:442px;top:97px" width="21" height="18" viewBox="442 97 21 18"><path d="M444.4 101 q0 -2 2 -2 h3.62 q1.1 0 1.8 .7 l.9 .8 h6.68 q2 0 2 2 v7.9 q0 2 -2 2 h-13 q-2 0 -2 -2 z" fill="#85858a"/><path d="M445.0 104.0 h15.8" stroke="#b4b4b8" stroke-width=".9"/></svg>
<svg style="left:500.8px;top:94.8px" width="12" height="22" viewBox="500.8 94.8 12 22"><path d="M504.2 97.6 L509.40000000000003 105.8 L504.2 114.0" fill="none" stroke="#6a6a6e" stroke-width="1.1" stroke-linecap="round" stroke-linejoin="round"/></svg>
<svg style="left:516px;top:97px" width="18" height="18" viewBox="516 97 18 18"><path d="M518.24 112.08 L518.80 109.76 L527.84 100.72 L529.60 102.48 L520.56 111.52 Z" fill="#f0a812"/><path d="M528.56 100.00 L529.28 99.28 Q530.00 98.80 530.64 99.36 L531.12 99.84 Q531.60 100.48 531.12 101.12 L530.40 101.84 Z" fill="#f0a812"/><path d="M518.16 99.36 Q518.56 98.64 519.44 99.20 L525.52 104.96 L524.16 106.32 L518.40 100.40 Q517.84 99.84 518.16 99.36 Z" fill="#f0a812"/><path d="M526.00 106.48 L527.28 107.60" stroke="#f0a812" stroke-width="1.52" stroke-linecap="butt"/><path d="M526.72 109.20 C526.88 107.60 528.64 107.20 529.84 108.08 C531.04 109.04 531.12 110.56 532.08 111.04 C530.48 112.40 528.24 112.32 527.28 111.36 C526.64 110.72 526.56 109.84 526.72 109.20 Z" fill="#f0a812"/></svg>
<svg style="left:656.4px;top:94.8px" width="12" height="22" viewBox="656.4 94.8 12 22"><path d="M659.8 97.6 L665.0 105.8 L659.8 114.0" fill="none" stroke="#6a6a6e" stroke-width="1.1" stroke-linecap="round" stroke-linejoin="round"/></svg>
<svg style="left:672px;top:97px" width="18" height="18" viewBox="672 97 18 18"><path d="M674.24 112.08 L674.80 109.76 L683.84 100.72 L685.60 102.48 L676.56 111.52 Z" fill="#f0a812"/><path d="M684.56 100.00 L685.28 99.28 Q686.00 98.80 686.64 99.36 L687.12 99.84 Q687.60 100.48 687.12 101.12 L686.40 101.84 Z" fill="#f0a812"/><path d="M674.16 99.36 Q674.56 98.64 675.44 99.20 L681.52 104.96 L680.16 106.32 L674.40 100.40 Q673.84 99.84 674.16 99.36 Z" fill="#f0a812"/><path d="M682.00 106.48 L683.28 107.60" stroke="#f0a812" stroke-width="1.52" stroke-linecap="butt"/><path d="M682.72 109.20 C682.88 107.60 684.64 107.20 685.84 108.08 C687.04 109.04 687.12 110.56 688.08 111.04 C686.48 112.40 684.24 112.32 683.28 111.36 C682.64 110.72 682.56 109.84 682.72 109.20 Z" fill="#f0a812"/></svg>
<svg style="left:825px;top:94.8px" width="12" height="22" viewBox="825 94.8 12 22"><path d="M828.4 97.6 L833.6 105.8 L828.4 114.0" fill="none" stroke="#6a6a6e" stroke-width="1.1" stroke-linecap="round" stroke-linejoin="round"/></svg>
<svg style="left:838px;top:94px" width="23" height="23" viewBox="838 94 23 23"><rect x="841.6333333333333" y="97.43333333333334" width="16.533333333333335" height="16.533333333333335" rx="2.273333333333334" fill="none" stroke="#fbb90a" stroke-width="1.7566666666666668"/><rect x="841.6333333333333" y="97.43333333333334" width="16.533333333333335" height="4.753333333333334" rx="1.6533333333333335" fill="#fbb90a"/><path d="M844.94 97.64 l-1.6 3.7200000000000006 M849.28 97.64 l-1.6 3.7200000000000006 M853.62 97.64 l-1.6 3.7200000000000006" stroke="#fff" stroke-width="1.3433333333333335"/><rect x="845.7666666666667" y="106.32000000000001" width="8.266666666666667" height="3.7200000000000006" rx="0.8266666666666668" fill="none" stroke="#fbb90a" stroke-width="1.5500000000000003"/></svg>
<svg style="left:993.4px;top:94.8px" width="12" height="22" viewBox="993.4 94.8 12 22"><path d="M996.8 97.6 L1002.0 105.8 L996.8 114.0" fill="none" stroke="#6a6a6e" stroke-width="1.1" stroke-linecap="round" stroke-linejoin="round"/></svg>
<svg style="left:1006px;top:93px" width="25" height="25" viewBox="1006 93 25 25"><circle cx="1018.4" cy="105.8" r="10.4" fill="#ffc505"/><rect x="1012.992" y="100.392" width="10.816" height="10.816" rx="1.04" fill="#fff"/></svg>
<svg style="left:1142.6px;top:94.8px" width="12" height="22" viewBox="1142.6 94.8 12 22"><path d="M1146.0 97.6 L1151.1999999999998 105.8 L1146.0 114.0" fill="none" stroke="#6a6a6e" stroke-width="1.1" stroke-linecap="round" stroke-linejoin="round"/></svg>
<svg style="left:1155px;top:93px" width="25" height="25" viewBox="1155 93 25 25"><rect x="1157.4" y="95.4" width="21" height="21" fill="#a3a3a6"/><rect x="1162.125" y="100.545" width="11.55" height="10.71" fill="#fff"/></svg>
<svg style="left:1219.6px;top:94.8px" width="12" height="22" viewBox="1219.6 94.8 12 22"><path d="M1223.0 97.6 L1228.1999999999998 105.8 L1223.0 114.0" fill="none" stroke="#6a6a6e" stroke-width="1.1" stroke-linecap="round" stroke-linejoin="round"/></svg>
<svg style="left:1232px;top:93px" width="25" height="25" viewBox="1232 93 25 25"><rect x="1234" y="95.4" width="21" height="21" fill="#a3a3a6"/><rect x="1238.725" y="100.545" width="11.55" height="10.71" fill="#fff"/></svg>
<svg style="left:1417px;top:96px" width="14" height="20" viewBox="1417 96 14 20"><path d="M1427.6 99 L1420.8 105.8 L1427.6 112.6" fill="none" stroke="#5a5a5e" stroke-width="1.3" stroke-linecap="round" stroke-linejoin="round"/></svg>
<svg style="left:1434px;top:97px" width="19" height="18" viewBox="1434 97 19 18"><path d="M1443.7 100.8 L1449.4 110.8 H1438.0 Z" fill="#f7b500" stroke="#f7b500" stroke-width="2.2" stroke-linejoin="round"/><path d="M1443.7 103.81599999999999 V107.536" stroke="#fff" stroke-width="1.69" stroke-linecap="round"/><circle cx="1443.7" cy="109.768" r="0.975" fill="#fff"/></svg>
<svg style="left:1457px;top:96px" width="14" height="20" viewBox="1457 96 14 20"><path d="M1460 99 L1466.8 105.8 L1460 112.6" fill="none" stroke="#5a5a5e" stroke-width="1.3" stroke-linecap="round" stroke-linejoin="round"/></svg>
<svg style="left:376px;top:141px" width="16" height="16" viewBox="376 141 16 16"><path d="M379.9 147.3 L384.4 152.3 L388.9 147.3" fill="none" stroke="#5a5a5e" stroke-width="1.6" stroke-linecap="round" stroke-linejoin="round"/></svg>
<svg style="left:396px;top:138px" width="23" height="23" viewBox="396 138 23 23"><rect x="399.6333333333334" y="141.23333333333332" width="16.533333333333335" height="16.533333333333335" rx="2.273333333333334" fill="none" stroke="#fbb90a" stroke-width="1.7566666666666668"/><rect x="399.6333333333334" y="141.23333333333332" width="16.533333333333335" height="4.753333333333334" rx="1.6533333333333335" fill="#fbb90a"/><path d="M402.94 141.44 l-1.6 3.7200000000000006 M407.28000000000003 141.44 l-1.6 3.7200000000000006 M411.62 141.44 l-1.6 3.7200000000000006" stroke="#fff" stroke-width="1.3433333333333335"/><rect x="403.7666666666667" y="150.11999999999998" width="8.266666666666667" height="3.7200000000000006" rx="0.8266666666666668" fill="none" stroke="#fbb90a" stroke-width="1.5500000000000003"/></svg>
<svg style="left:398px;top:170px" width="16" height="16" viewBox="398 170 16 16"><path d="M401.1 176.4 L405.6 181.4 L410.1 176.4" fill="none" stroke="#5a5a5e" stroke-width="1.6" stroke-linecap="round" stroke-linejoin="round"/></svg>
<svg style="left:417px;top:166px" width="25" height="25" viewBox="417 166 25 25"><circle cx="429.3" cy="178.4" r="10.4" fill="#ffc505"/><rect x="423.892" y="172.99200000000002" width="10.816" height="10.816" rx="1.04" fill="#fff"/></svg>
<svg style="left:419px;top:194px" width="16" height="16" viewBox="419 194 16 16"><path d="M422.1 200.2 L426.6 205.2 L431.1 200.2" fill="none" stroke="#5a5a5e" stroke-width="1.6" stroke-linecap="round" stroke-linejoin="round"/></svg>
<svg style="left:438px;top:190px" width="25" height="25" viewBox="438 190 25 25"><rect x="440" y="191.8" width="20.8" height="20.8" fill="#a3a3a6"/><rect x="444.68" y="196.89600000000002" width="11.440000000000001" height="10.608" fill="#fff"/></svg>
<svg style="left:459px;top:213px" width="25" height="25" viewBox="459 213 25 25"><rect x="461.3" y="215.3" width="20.8" height="20.8" fill="#a3a3a6"/><rect x="465.2" y="219.2" width="13" height="13" fill="#fff"/><rect x="468.6" y="221.4" width="6.2" height="8.6" fill="none" stroke="#8e8e92" stroke-width="1"/><rect x="470.4" y="223" width="2.6" height="5.4" fill="#b0b0b4"/></svg>
<div style="left:374px;top:238px;width:329px;height:23.6px;background:#dcdcde;border-radius:6px;"></div>
<svg style="left:459px;top:237px" width="25" height="25" viewBox="459 237 25 25"><rect x="461.3" y="239.2" width="20.8" height="20.8" fill="#a3a3a6"/><rect x="465.98" y="244.296" width="11.440000000000001" height="10.608" fill="#fff"/></svg>
<svg style="left:417px;top:261px" width="24" height="26" viewBox="417 261 24 26"><path d="M429.2 263.6 L438.4 268.6 L429.2 273.6 L420.0 268.6 Z" fill="#fbb84a"/><path d="M420.0 268.6 L429.2 273.6 V284.0 L420.0 279.0 Z" fill="#f7a11a"/><path d="M438.4 268.6 L429.2 273.6 V284.0 L438.4 279.0 Z" fill="#ee8a10"/><path d="M429.2 263.6 L438.4 268.6 V279.0 L429.2 284.0 L420.0 279.0 V268.6 Z" fill="none" stroke="#f19a14" stroke-width="1" stroke-linejoin="round"/><path d="M432.59999999999997 274.40000000000003 l1.6 -1 v5.4" fill="none" stroke="#fff" stroke-width="1.3" stroke-linecap="round" stroke-linejoin="round"/><rect x="423.2" y="273.0" width="2.4" height="4.4" fill="none" stroke="#fff" stroke-width=".9" transform="skewY(28)" transform-origin="424.2 275.20000000000005"/></svg>
<svg style="left:417px;top:285px" width="24" height="24" viewBox="417 285 24 24"><rect x="419.6" y="287.4" width="19.6" height="19.6" rx="1" fill="#f59b1c"/><path d="M432 291.6 H423.6 V302.8 H432" fill="none" stroke="#fff" stroke-width="1.5" stroke-linejoin="round"/><path d="M427.4 297.2 H436.4 M433.4 294 L436.6 297.2 L433.4 300.4" fill="none" stroke="#fff" stroke-width="1.5" stroke-linecap="round" stroke-linejoin="round"/></svg>
<div style="left:367.4px;top:775.3px;width:341px;height:28.2px;background:#ededee;border-radius:7px;box-shadow:inset 0 0 0 1px #d9d9db;"></div>
<svg style="left:372px;top:779px" width="21" height="21" viewBox="372 779 21 21"><circle cx="382.4" cy="789.4" r="7.6" fill="none" stroke="#2c2c2e" stroke-width="1.5"/><path d="M378.4 787.0 h8 M379.79999999999995 789.8 h5.2 M381.2 792.6 h2.4" stroke="#2c2c2e" stroke-width="1.4" stroke-linecap="round"/></svg>
<div style="left:1007.4px;top:241.2px;width:183.6px;height:14.6px;background:#ffffff;border-radius:3px;box-shadow:inset 0 0 0 1px #bdbdc0;"></div>
<svg style="left:1077px;top:243px" width="44" height="11" viewBox="1077 243 44 11"><circle cx="1082.9" cy="248.4" r="2.4" fill="none" stroke="#f7b924" stroke-width="1.3"/><path d="M1099.2 245.4 L1102 247 V250.2 L1099.2 251.8 L1096.4 250.2 V247 Z" fill="#f5a83a"/><rect x="1112" y="245.4" width="6.2" height="6.2" rx=".6" fill="#f5a83a"/><rect x="1113.8" y="247" width="2.6" height="3" fill="#fbd9a0"/></svg>
<div style="left:1008.2px;top:260.2px;width:182.2px;height:392.4px;background:#d3d3d3;border-radius:15px;box-shadow:inset 0 0 0 1px #5a5a5e;"></div>
<svg style="left:1052px;top:260px" width="94" height="14" viewBox="1052 260 94 14"><path d="M1051.6 260.2 H1146.6 Q1145.4 260.6 1145.4 262.4 V264.8 Q1145.4 273.8 1136.4 273.8 H1061.8 Q1052.8 273.8 1052.8 264.8 V262.4 Q1052.8 260.6 1051.6 260.2 Z" fill="#000"/></svg>
<div style="left:1075.8px;top:433.8px;width:46.8px;height:45.8px;background:#ffffff;border-radius:11px;"></div>
<div style="left:1066.8px;top:647px;width:64.8px;height:2.2px;background:#111;border-radius:1.1px;"></div>
<div style="left:1304.4px;top:152.5px;width:148.6px;height:267px;background:#e0e0e0;border-radius:8px;box-shadow:inset 0 0 0 1px #cbcbcd, 0 5px 28px rgba(0,0,0,.17), 0 1px 7px rgba(0,0,0,.09);"></div>
<div style="left:1325.6px;top:172.8px;width:102px;height:222.2px;background:#ffffff;border-radius:8px;"></div>
<svg style="left:1350px;top:172px" width="54" height="10" viewBox="1350 172 54 10"><path d="M1350 172.8 H1403 V174.6 Q1403 180.6 1397 180.6 H1356 Q1350 180.6 1350 174.6 Z" fill="#0a0a0a"/></svg>
<div style="left:1326px;top:180px;width:83px;height:1px;background:#cfcfcf;"></div>
<svg style="left:726px;top:777px" width="23" height="22" viewBox="726 777 23 22"><rect x="729" y="780" width="16.6" height="15.8" rx="3" fill="none" stroke="#727276" stroke-width="1.4"/><rect x="732" y="782.6" width="2.8" height="10.6" rx="1.2" fill="#727276"/></svg>
<svg style="left:757px;top:777px" width="23" height="23" viewBox="757 777 23 23"><circle cx="768.4" cy="788" r="8.4" fill="none" stroke="#727276" stroke-width="1.3"/><circle cx="768.4" cy="783.6" r="1.5" fill="#727276"/><path d="M763.6 786.2 H773.2 M768.4 786.2 V789.4 M768.4 789.4 L765.8 793.8 M768.4 789.4 L771 793.8" fill="none" stroke="#727276" stroke-width="1.3" stroke-linecap="round"/></svg>
<svg style="left:791px;top:777px" width="23" height="23" viewBox="791 777 23 23"><circle cx="802.8" cy="788" r="8.4" fill="none" stroke="#727276" stroke-width="1.4"/><path d="M802.8 779.6 A8.4 8.4 0 0 0 802.8 796.4 Z" fill="#727276"/><path d="M802.8 783.8 A4.2 4.2 0 0 0 802.8 792.2 Z" fill="#fcfcfc"/><path d="M802.8 783.8 A4.2 4.2 0 0 1 802.8 792.2 Z" fill="#727276"/></svg>
<svg style="left:826px;top:775px" width="24" height="25" viewBox="826 775 24 25"><rect x="829.4" y="783.8" width="11.8" height="11.6" rx="1.8" fill="none" stroke="#727276" stroke-width="1.4"/><path d="M840 779 Q846.2 779.4 846.4 784.6" fill="none" stroke="#727276" stroke-width="1.3" stroke-linecap="round"/><path d="M842.2 776.8 L839.6 779 L842.2 781.2" fill="none" stroke="#727276" stroke-width="1.3" stroke-linecap="round" stroke-linejoin="round"/></svg>
<svg style="left:857px;top:777px" width="23" height="22" viewBox="857 777 23 22"><rect x="860.4" y="780" width="16.6" height="15.8" rx="3" fill="none" stroke="#c9c9cc" stroke-width="1.4"/><path d="M868.7 780 V795.8" stroke="#c9c9cc" stroke-width="1.4"/></svg>
<svg style="left:895px;top:776px" width="17" height="25" viewBox="895 776 17 25"><rect x="898.6" y="778.8" width="10.6" height="18.6" rx="2.6" fill="none" stroke="#727276" stroke-width="1.5"/><path d="M902.2 794.6 h3.4" stroke="#727276" stroke-width="1.1" stroke-linecap="round"/><path d="M902 779.6 h3.8" stroke="#727276" stroke-width="1.6"/></svg>
<svg style="left:1078px;top:776px" width="25" height="25" viewBox="1078 776 25 25"><circle cx="1088.6" cy="785.6" r="6.8" fill="none" stroke="#727276" stroke-width="1.4"/><path d="M1093.6 790.6 L1099.0 796.0" stroke="#727276" stroke-width="1.7" stroke-linecap="round"/><path d="M1085.1999999999998 785.6 h6.8" stroke="#727276" stroke-width="1.2" stroke-linecap="round"/></svg>
<svg style="left:1166px;top:776px" width="25" height="25" viewBox="1166 776 25 25"><circle cx="1177" cy="785.6" r="6.8" fill="none" stroke="#727276" stroke-width="1.4"/><path d="M1182 790.6 L1187.4 796.0" stroke="#727276" stroke-width="1.7" stroke-linecap="round"/><path d="M1173.6 785.6 h6.8" stroke="#727276" stroke-width="1.2" stroke-linecap="round"/><path d="M1177 782.2 v6.8" stroke="#727276" stroke-width="1.2" stroke-linecap="round"/></svg>
<svg style="left:1302px;top:776px" width="26" height="25" viewBox="1302 776 26 25"><path d="M1305.4 784 V781.6 Q1305.4 779.4 1307.6 779.4 H1310 M1320 779.4 H1322.4 Q1324.6 779.4 1324.6 781.6 V784 M1324.6 792 V794.4 Q1324.6 796.6 1322.4 796.6 H1320 M1310 796.6 H1307.6 Q1305.4 796.6 1305.4 794.4 V792" fill="none" stroke="#727276" stroke-width="1.4" stroke-linecap="round"/><path d="M1319.6 786.4 A5 5 0 1 0 1319.8 789.6" fill="none" stroke="#727276" stroke-width="1.3" stroke-linecap="round"/><path d="M1320.2 783.4 V786.8 H1316.8" fill="none" stroke="#727276" stroke-width="1.3" stroke-linecap="round" stroke-linejoin="round"/></svg>
<svg style="left:1337px;top:776px" width="25" height="24" viewBox="1337 776 25 24"><path d="M1340 778.8 V797.2" stroke="#727276" stroke-width="1.5" stroke-linecap="round"/><rect x="1343.2" y="781" width="11.4" height="5.4" rx=".8" fill="none" stroke="#727276" stroke-width="1.4"/><rect x="1343.2" y="789.6" width="15.6" height="5.4" rx=".8" fill="none" stroke="#727276" stroke-width="1.4"/></svg>
<svg style="left:1371px;top:776px" width="25" height="25" viewBox="1371 776 25 25"><rect x="1379.2" y="783.4" width="9.2" height="9.2" rx=".8" fill="none" stroke="#727276" stroke-width="1.4"/><path d="M1383.8 779.2 V781.4 M1383.8 794.6 V796.8 M1374.6 788 H1376.8 M1390.8 788 H1393 M1381.6 779.2 H1386 M1381.6 796.8 H1386 M1374.6 785.8 V790.2 M1393 785.8 V790.2" stroke="#727276" stroke-width="1.3" stroke-linecap="round"/></svg>
<svg style="left:1405px;top:777px" width="26" height="22" viewBox="1405 777 26 22"><path d="M1418 782.2 L1423.6 792.4 H1412.4 Z" fill="none" stroke="#727276" stroke-width="1.4" stroke-linejoin="round"/><circle cx="1418" cy="789.2" r="1.5" fill="#727276"/><path d="M1408.6 788 H1411 M1425 788 H1427.6 M1408.6 785.8 V790.2 M1427.6 785.8 V790.2" stroke="#727276" stroke-width="1.3" stroke-linecap="round"/></svg>
<svg style="left:1442px;top:776px" width="26" height="24" viewBox="1442 776 26 24"><path d="M1451.6 780.6 H1445.6 V796.4 H1465 V780.6 H1459" fill="none" stroke="#727276" stroke-width="1.4" stroke-linejoin="round"/><path d="M1455.3 779.4 V790.4 M1451.8 787 L1455.3 790.6 L1458.8 787" fill="none" stroke="#727276" stroke-width="1.4" stroke-linecap="round" stroke-linejoin="round"/></svg>
<svg style="left:375px;top:819px" width="21" height="13" viewBox="375 819 21 13"><path d="M378 819.8 H389.6 Q390.8 819.8 391.6 820.8 L394.8 825.2 Q395.2 825.9 394.8 826.5 L391.6 830.9 Q390.8 831.9 389.6 831.9 H378 Q375.8 831.9 375.8 829.7 V822 Q375.8 819.8 378 819.8 Z" fill="#0a7aff"/></svg>
<svg style="left:1443px;top:815px" width="23" height="22" viewBox="1443 815 23 22"><rect x="1446.6" y="817.8" width="16.6" height="16.4" rx="3" fill="none" stroke="#727276" stroke-width="1.4"/><rect x="1449.2" y="827.4" width="11.4" height="4.2" rx="1" fill="#727276"/></svg>
<svg style="left:405px;top:1073px" width="14" height="18" viewBox="405 1073 14 18"><path d="M409.09999999999997 1079.6 L411.7 1077.0 L414.3 1079.6 M409.09999999999997 1083.8 L411.7 1086.3999999999999 L414.3 1083.8" fill="none" stroke="#2a2a2c" stroke-width="1.4" stroke-linecap="round" stroke-linejoin="round"/></svg>
<div style="left:428px;top:1074.4px;width:1px;height:15.4px;background:#dcdce0;"></div>
<svg style="left:439px;top:1073px" width="24" height="18" viewBox="439 1073 24 18"><path d="M441.8 1081.8 Q451 1071.6 460.4 1081.8 Q451 1092 441.8 1081.8 Z" fill="none" stroke="#c2c1c9" stroke-width="1.3"/><circle cx="451.1" cy="1081.8" r="2.7" fill="none" stroke="#c2c1c9" stroke-width="2.3"/></svg>
<svg style="left:475px;top:1071px" width="22" height="22" viewBox="475 1071 22 22"><circle cx="486.4" cy="1081.6" r="8" fill="none" stroke="#bcbcc0" stroke-width="1.3"/><circle cx="486.4" cy="1077.6" r="1" fill="#bcbcc0"/><path d="M485 1080.6 H486.6 V1085.8 M484.6 1085.8 H488.6" fill="none" stroke="#bcbcc0" stroke-width="1.2" stroke-linecap="round"/></svg>
<div style="left:650px;top:1067.3px;width:228px;height:28.4px;background:#ededee;border-radius:7px;box-shadow:inset 0 0 0 1px #d9d9db;"></div>
<svg style="left:654px;top:1071px" width="21" height="21" viewBox="654 1071 21 21"><circle cx="664.8" cy="1081.4" r="7.6" fill="none" stroke="#2c2c2e" stroke-width="1.5"/><path d="M660.8 1079.0 h8 M662.1999999999999 1081.8000000000002 h5.2 M663.5999999999999 1084.6000000000001 h2.4" stroke="#2c2c2e" stroke-width="1.4" stroke-linecap="round"/></svg>
<svg style="left:968px;top:1073px" width="14" height="18" viewBox="968 1073 14 18"><path d="M972.0 1079.6 L974.6 1077.0 L977.2 1079.6 M972.0 1083.8 L974.6 1086.3999999999999 L977.2 1083.8" fill="none" stroke="#2a2a2c" stroke-width="1.4" stroke-linecap="round" stroke-linejoin="round"/></svg>
<div style="left:1141.6px;top:1067.3px;width:226.8px;height:28.4px;background:#ededee;border-radius:7px;box-shadow:inset 0 0 0 1px #d9d9db;"></div>
<svg style="left:1145px;top:1071px" width="21" height="21" viewBox="1145 1071 21 21"><circle cx="1156.2" cy="1081.4" r="7.6" fill="none" stroke="#2c2c2e" stroke-width="1.5"/><path d="M1152.2 1079.0 h8 M1153.6000000000001 1081.8000000000002 h5.2 M1155.0 1084.6000000000001 h2.4" stroke="#2c2c2e" stroke-width="1.4" stroke-linecap="round"/></svg>
<svg style="left:1382px;top:1070px" width="20" height="23" viewBox="1382 1070 20 23"><path d="M1384.8 1075.8 H1398.8" stroke="#7c7c80" stroke-width="1.5" stroke-linecap="round"/><path d="M1389.4 1075.6 V1074 Q1389.4 1072.8 1390.6 1072.8 H1393 Q1394.2 1072.8 1394.2 1074 V1075.6" fill="none" stroke="#7c7c80" stroke-width="1.3"/><path d="M1386.2 1076.2 L1387.2 1088.6 Q1387.3 1090.2 1388.9 1090.2 H1394.7 Q1396.3 1090.2 1396.4 1088.6 L1397.4 1076.2" fill="none" stroke="#7c7c80" stroke-width="1.4"/><path d="M1389.6 1078.6 L1390 1087.6 M1391.8 1078.6 V1087.6 M1394 1078.6 L1393.6 1087.6" stroke="#7c7c80" stroke-width="1" stroke-linecap="round"/></svg>
<div style="left:1410px;top:1072.6px;width:1px;height:18px;background:#dcdce0;"></div>
<svg style="left:1420px;top:1070px" width="21" height="21" viewBox="1420 1070 21 21"><rect x="1423" y="1073" width="15.4" height="15.4" rx="3" fill="none" stroke="#0a7aff" stroke-width="1.5"/><rect x="1425.6" y="1075.6" width="3" height="10.2" rx="1" fill="#0a7aff"/></svg>
<svg style="left:1448px;top:1070px" width="21" height="21" viewBox="1448 1070 21 21"><rect x="1450.8" y="1073" width="15.4" height="15.4" rx="3" fill="none" stroke="#0a7aff" stroke-width="1.5"/><rect x="1460.6" y="1075.6" width="3" height="10.2" rx="1" fill="#0a7aff"/></svg>
<div class="txl">
<span class="t" style="top:6.25px;font-size:17.5px;color:#444448;font-weight:700;-webkit-text-stroke-width:0.08px;transform:skewX(0.2deg) scaleX(0.9923);left:403.40px;">Test</span>
<span class="t" style="top:4.75px;font-size:15.1px;color:#48484c;transform:skewX(0.2deg) scaleX(0.9717);left:598.57px;">Test</span>
<span class="t" style="top:4.75px;font-size:15.1px;color:#48484c;transform:skewX(0.2deg) scaleX(1.0157);left:671.07px;">iPhone 11</span>
<span class="t" style="top:4.75px;font-size:15.1px;color:#48484c;transform:skewX(0.2deg) scaleX(1.0649);left:1070.68px;">Build</span>
<span class="t" style="top:4.75px;font-size:15.1px;color:#48484c;font-weight:700;transform:skewX(0.2deg) scaleX(1.0281);left:1110.25px;">Succeeded</span>
<span class="t" style="top:4.75px;font-size:15.1px;color:#48484c;transform:skewX(0.2deg) scaleX(1.0000);left:1195.65px;">|</span>
<span class="t" style="top:4.75px;font-size:15.1px;color:#48484c;transform:skewX(0.2deg) scaleX(1.0304);left:1204.65px;">Today at 19:04</span>
<span class="t" style="top:48.75px;font-size:15.2px;color:#0f74f2;transform:skewX(0.2deg) scaleX(1.0296);left:514.32px;">Main.storyboard (Base)</span>
<span class="t" style="top:85.75px;font-size:15.5px;color:#2c2c2e;transform:skewX(0.2deg) scaleX(0.9400);letter-spacing:-0.072px;left:396.67px;">Test</span>
<span class="t" style="top:85.75px;font-size:15.5px;color:#2c2c2e;transform:skewX(0.2deg) scaleX(0.9400);letter-spacing:-0.072px;left:469.47px;">Test</span>
<span class="t" style="top:85.75px;font-size:15.5px;color:#2c2c2e;transform:skewX(0.2deg) scaleX(1.0251);left:540.50px;">Main.storyboard</span>
<span class="t" style="top:85.75px;font-size:15.5px;color:#2c2c2e;transform:skewX(0.2deg) scaleX(0.9821);left:696.15px;">Main.st…rd (Base)</span>
<span class="t" style="top:85.75px;font-size:15.5px;color:#2c2c2e;transform:skewX(0.2deg) scaleX(0.9533);left:866.34px;">View Co…r Scene</span>
<span class="t" style="top:85.75px;font-size:15.5px;color:#2c2c2e;transform:skewX(0.2deg) scaleX(0.9965);left:1035.33px;">View Controller</span>
<span class="t" style="top:85.75px;font-size:15.5px;color:#2c2c2e;transform:skewX(0.2deg) scaleX(0.9444);left:1184.54px;">View</span>
<span class="t" style="top:85.75px;font-size:15.5px;color:#2c2c2e;transform:skewX(0.2deg) scaleX(0.9998);left:1261.13px;">Wechat Login Button</span>
<span class="t" style="top:129.75px;font-size:15.6px;color:#4a4a4e;font-weight:700;-webkit-text-stroke-width:0px;transform:skewX(0.2deg) scaleX(0.9642);left:423.20px;">View Controller Scene</span>
<span class="t" style="top:158.75px;font-size:15.3px;color:#454548;transform:skewX(0.2deg) scaleX(1.0192);left:443.83px;">View Controller</span>
<span class="t" style="top:182.75px;font-size:15.3px;color:#454548;transform:skewX(0.2deg) scaleX(0.9658);left:465.44px;">View</span>
<span class="t" style="top:205.75px;font-size:15.3px;color:#454548;transform:skewX(0.2deg) scaleX(0.9696);left:485.93px;">Safe Area</span>
<span class="t" style="top:229.75px;font-size:15.3px;color:#454548;transform:skewX(0.2deg) scaleX(1.0143);left:486.53px;">Wechat Login Button</span>
<span class="t" style="top:253.75px;font-size:15.3px;color:#454548;transform:skewX(0.2deg) scaleX(1.0090);left:443.13px;">First Responder</span>
<span class="t" style="top:277.75px;font-size:15.3px;color:#454548;transform:skewX(0.2deg) scaleX(1.0109);left:443.13px;">Exit</span>
<span class="t" style="top:769.75px;font-size:15.5px;color:#b6b6ba;transform:skewX(0.2deg) scaleX(1.0421);left:395.58px;">Filter</span>
<span class="t" style="top:768.25px;font-size:14.8px;color:#6a6a6e;transform:skewX(0.2deg) scaleX(0.9966);left:927.76px;">iPhone 11 Pro Max</span>
<span class="t" style="top:768.25px;font-size:14.8px;color:#6a6a6e;transform:skewX(0.2deg) scaleX(1.0655);left:1120.00px;">33%</span>
<span class="t" style="top:1061.25px;font-size:14.5px;color:#2a2a2c;transform:skewX(0.2deg) scaleX(1.0346);left:371.67px;">Auto</span>
<span class="t" style="top:1061.75px;font-size:15.5px;color:#b6b6ba;transform:skewX(0.2deg) scaleX(1.0512);left:677.86px;">Filter</span>
<span class="t" style="top:1061.25px;font-size:14.5px;color:#2a2a2c;transform:skewX(0.2deg) scaleX(1.0750);left:896.67px;">All Output</span>
<span class="t" style="top:1061.75px;font-size:15.5px;color:#b6b6ba;transform:skewX(0.2deg) scaleX(1.0512);left:1169.46px;">Filter</span>
</div>
</main>
<aside id="inspector" class="g" aria-label="Identity inspector">
<svg style="left:1872px;top:13px" width="30" height="23" viewBox="1872 13 30 23"><rect x="1874.8" y="15.6" width="24.4" height="17.6" rx="3.6" fill="none" stroke="#727276" stroke-width="1.6"/><path d="M1890.8 15.6 V33.2" stroke="#727276" stroke-width="1.4"/><path d="M1893.4 19.6 h3.2 M1893.4 22.4 h3.2 M1893.4 25.2 h3.2" stroke="#727276" stroke-width="1.1" stroke-linecap="round"/></svg>
<svg style="left:1572px;top:58px" width="19" height="22" viewBox="1572 58 19 22"><g transform="translate(0 0.7)"><path d="M1577.4 61.2 H1583 L1587.8 66 V75.4 Q1587.8 77.4 1585.8 77.4 H1577.4 Q1575.4 77.4 1575.4 75.4 V63.2 Q1575.4 61.2 1577.4 61.2 Z" fill="none" stroke="#727276" stroke-width="1.25" stroke-linejoin="round"/><path d="M1582.8 61.4 V64.8 Q1582.8 66.2 1584.2 66.2 H1587.6" fill="none" stroke="#727276" stroke-width="1.3"/></g></svg>
<svg style="left:1610px;top:58px" width="22" height="22" viewBox="1610 58 22 22"><g transform="translate(0 0.7)"><circle cx="1620.8" cy="69" r="7.8" fill="none" stroke="#727276" stroke-width="1.25"/><path d="M1621 64.2 V69.4 H1616.6" fill="none" stroke="#727276" stroke-width="1.3" stroke-linecap="round" stroke-linejoin="round"/></g></svg>
<svg style="left:1650px;top:58px" width="22" height="22" viewBox="1650 58 22 22"><g transform="translate(0 0.7)"><circle cx="1660.6" cy="69" r="7.8" fill="none" stroke="#727276" stroke-width="1.25"/><path d="M1658 66.6 Q1658 64.2 1660.6 64.2 Q1663.2 64.2 1663.2 66.4 Q1663.2 67.8 1661.8 68.6 Q1660.6 69.4 1660.6 70.8" fill="none" stroke="#727276" stroke-width="1.25" stroke-linecap="round"/><circle cx="1660.6" cy="73.4" r=".95" fill="#727276"/></g></svg>
<svg style="left:1691px;top:62px" width="18" height="15" viewBox="1691 62 18 15"><rect x="1691.4" y="62" width="17.4" height="14.6" rx="3" fill="#0a7aff"/><rect x="1694" y="64.8" width="6.6" height="5.6" fill="#fff"/><path d="M1702.4 65.4 h4 M1702.4 67.6 h4 M1702.4 69.8 h4 M1694 72.8 h12.4" stroke="#fff" stroke-width="1.2"/></svg>
<svg style="left:1729px;top:58px" width="22" height="22" viewBox="1729 58 22 22"><g transform="translate(0 0.7)"><path d="M1731.6 63 H1748 M1731.6 69 H1748 M1731.6 75 H1748" stroke="#727276" stroke-width="1.3" stroke-linecap="round"/><circle cx="1742.6" cy="63" r="1.55" fill="#eeeef0" stroke="#727276" stroke-width="1.1"/><circle cx="1736.4" cy="69" r="1.55" fill="#eeeef0" stroke="#727276" stroke-width="1.1"/><circle cx="1742.6" cy="75" r="1.55" fill="#eeeef0" stroke="#727276" stroke-width="1.1"/></g></svg>
<svg style="left:1768px;top:58px" width="21" height="22" viewBox="1768 58 21 22"><g transform="translate(0 0.7)"><path d="M1772 61.6 V77 H1786 Z" fill="none" stroke="#727276" stroke-width="1.3" stroke-linejoin="round"/><path d="M1775.2 69.6 V73.8 H1779.4 Z" fill="none" stroke="#727276" stroke-width="1.2" stroke-linejoin="round"/></g></svg>
<svg style="left:1808px;top:58px" width="22" height="22" viewBox="1808 58 22 22"><g transform="translate(0 0.7)"><path d="M1825.6 64.4 A7.8 7.8 0 1 0 1825.6 73.6" fill="none" stroke="#727276" stroke-width="1.25" stroke-linecap="round"/><circle cx="1819.4" cy="69" r="3" fill="#727276"/><path d="M1822 69 H1827.6" stroke="#727276" stroke-width="1.25" stroke-linecap="round"/></g></svg>
<div style="left:1593px;top:128.39999999999998px;width:317.4px;height:20.6px;background:#ffffff;border-radius:5.5px;box-shadow:0 0.5px 1.5px rgba(0,0,0,.32), 0 0 0 0.5px rgba(0,0,0,.08);"></div>
<svg style="left:1868px;top:129px" width="19" height="19" viewBox="1868 129 19 19"><circle cx="1877.4" cy="138.4" r="6.9" fill="#78787c"/><path d="M1873.6 138.4 H1881 M1878 135.2 L1881.2 138.4 L1878 141.6" fill="none" stroke="#fff" stroke-width="1.5" stroke-linecap="round" stroke-linejoin="round"/></svg>
<svg style="left:1892px;top:131px" width="15.8" height="15" viewBox="1892 131 15.8 15"><rect x="1892" y="131" width="15.8" height="15" rx="4" fill="#1a7cf6"/><path d="M1897.3000000000002 137.6 L1899.9 140.2 L1902.5 137.6" fill="none" stroke="#fff" stroke-width="1.8" stroke-linecap="round" stroke-linejoin="round"/></svg>
<div style="left:1593px;top:157.6px;width:317.4px;height:20.6px;background:#ffffff;border-radius:5.5px;box-shadow:0 0.5px 1.5px rgba(0,0,0,.32), 0 0 0 0.5px rgba(0,0,0,.08);"></div>
<svg style="left:1892px;top:160px" width="15.8" height="15" viewBox="1892 160 15.8 15"><rect x="1892" y="160" width="15.8" height="15" rx="4" fill="#1a7cf6"/><path d="M1897.3000000000002 166.6 L1899.9 169.2 L1902.5 166.6" fill="none" stroke="#fff" stroke-width="1.8" stroke-linecap="round" stroke-linejoin="round"/></svg>
<div style="left:1592.6px;top:188.2px;width:15px;height:15px;background:#ffffff;border-radius:3.8px;box-shadow:inset 0 0 0 0.5px rgba(0,0,0,.14), 0 0.5px 1.5px rgba(0,0,0,.22);"></div>
<div style="left:1485px;top:77.6px;width:431px;height:139.7px;border:4.2px solid #ff2700;border-radius:7.5px;box-sizing:border-box;"></div>
<div style="left:1491px;top:223.4px;width:418px;height:1px;background:#dcdcdf;"></div>
<div style="left:1593px;top:266.8px;width:316px;height:21px;background:#ffffff;border-radius:0px;box-shadow:0 1px 0 0 #d0d0d3, 0 0 0 0.5px #e3e3e6;"></div>
<div style="left:1491px;top:305.6px;width:418px;height:1px;background:#dcdcdf;"></div>
<div style="left:1491.6px;top:341.4px;width:417.4px;height:127.4px;background:#ffffff;box-shadow:inset 0 0 0 1px #c9c9cc;"></div>
<div style="left:1588px;top:350.6px;width:1px;height:20px;background:#dededf;"></div>
<div style="left:1678px;top:350.6px;width:1px;height:20px;background:#dededf;"></div>
<div style="left:1492.6px;top:378px;width:415.4px;height:1px;background:#e2e2e4;"></div>
<svg style="left:1497px;top:448px" width="19" height="19" viewBox="1497 448 19 19"><path d="M1506.2 450.4 V463.6 M1499.6 457 H1512.8" stroke="#5a5a5e" stroke-width="1.3" stroke-linecap="round"/></svg>
<svg style="left:1523px;top:454px" width="19" height="7" viewBox="1523 454 19 7"><path d="M1525.8 457 H1538.8" stroke="#b8b8bc" stroke-width="1.3" stroke-linecap="round"/></svg>
<div style="left:1491px;top:479.4px;width:418px;height:1px;background:#dcdcdf;"></div>
<div style="left:1593px;top:522.8px;width:316px;height:21.6px;background:#ffffff;border-radius:0px;box-shadow:0 1px 0 0 #d0d0d3, 0 0 0 0.5px #e3e3e6;"></div>
<svg style="left:1594px;top:555px" width="15" height="15" viewBox="1594 555 15 15"><path d="M1597 557.6 L1605.4 566 M1605.4 557.6 L1597 566" stroke="#2a2a2c" stroke-width="1.7" stroke-linecap="round"/></svg>
<div style="left:1616.6px;top:556.6px;width:11.4px;height:11.2px;background:#f4a39b;border-radius:2px;"></div>
<div style="left:1640.3px;top:556.6px;width:11.4px;height:11.2px;background:#f6c282;border-radius:2px;"></div>
<div style="left:1664.0px;top:556.6px;width:11.4px;height:11.2px;background:#f8dc82;border-radius:2px;"></div>
<div style="left:1687.6999999999998px;top:556.6px;width:11.4px;height:11.2px;background:#c6e286;border-radius:2px;"></div>
<div style="left:1711.3999999999999px;top:556.6px;width:11.4px;height:11.2px;background:#96c5f8;border-radius:2px;"></div>
<div style="left:1735.1px;top:556.6px;width:11.4px;height:11.2px;background:#d9b8ee;border-radius:2px;"></div>
<div style="left:1758.8px;top:556.6px;width:11.4px;height:11.2px;background:#d2d2d4;border-radius:2px;"></div>
<div style="left:1593px;top:605.8000000000001px;width:317.4px;height:20.4px;background:#ffffff;border-radius:5.5px;box-shadow:0 0.5px 1.5px rgba(0,0,0,.32), 0 0 0 0.5px rgba(0,0,0,.08);"></div>
<svg style="left:1891.6px;top:607.8px" width="15.8" height="15.6" viewBox="1891.6 607.8 15.8 15.6"><rect x="1891.6" y="607.8" width="15.8" height="15.6" rx="4" fill="#1a7cf6"/><path d="M1896.7 613.8 L1899.5 610.9999999999999 L1902.3 613.8 M1896.7 617.5999999999999 L1899.5 620.3999999999999 L1902.3 617.5999999999999" fill="none" stroke="#fff" stroke-width="1.5" stroke-linecap="round" stroke-linejoin="round"/></svg>
<div style="left:1593px;top:635.6px;width:316px;height:20.8px;background:#ffffff;border-radius:0px;box-shadow:0 1px 0 0 #d0d0d3, 0 0 0 0.5px #e3e3e6;"></div>
<div style="left:1491px;top:673.8px;width:418px;height:1px;background:#dcdcdf;"></div>
<div style="left:1593.2px;top:716.4px;width:15px;height:15px;background:#ffffff;border-radius:3.8px;box-shadow:inset 0 0 0 0.5px rgba(0,0,0,.14), 0 0.5px 1.5px rgba(0,0,0,.22);"></div>
<div style="left:1593px;top:741px;width:316px;height:21.4px;background:#ffffff;border-radius:0px;box-shadow:0 1px 0 0 #d0d0d3, 0 0 0 0.5px #e3e3e6;"></div>
<div style="left:1593px;top:771.4px;width:316px;height:21.2px;background:#ffffff;border-radius:0px;box-shadow:0 1px 0 0 #d0d0d3, 0 0 0 0.5px #e3e3e6;"></div>
<div style="left:1593px;top:802px;width:316px;height:20.8px;background:#ffffff;border-radius:0px;box-shadow:0 1px 0 0 #d0d0d3, 0 0 0 0.5px #e3e3e6;"></div>
<div style="left:1491px;top:829.8px;width:418px;height:1px;background:#dcdcdf;"></div>
<div style="left:1593.2px;top:837.6px;width:15px;height:15px;background:#ffffff;border-radius:3.8px;box-shadow:inset 0 0 0 0.5px rgba(0,0,0,.14), 0 0.5px 1.5px rgba(0,0,0,.22);"></div>
<div style="left:1593.2px;top:861.3px;width:15px;height:15px;background:#ffffff;border-radius:3.8px;box-shadow:inset 0 0 0 0.5px rgba(0,0,0,.14), 0 0.5px 1.5px rgba(0,0,0,.22);"></div>
<div style="left:1593.2px;top:885.1px;width:15px;height:15px;background:#ffffff;border-radius:3.8px;box-shadow:inset 0 0 0 0.5px rgba(0,0,0,.14), 0 0.5px 1.5px rgba(0,0,0,.22);"></div>
<div style="left:1593.2px;top:908.8px;width:15px;height:15px;background:#ffffff;border-radius:3.8px;box-shadow:inset 0 0 0 0.5px rgba(0,0,0,.14), 0 0.5px 1.5px rgba(0,0,0,.22);"></div>
<div style="left:1593.2px;top:932.5px;width:15px;height:15px;background:#ffffff;border-radius:3.8px;box-shadow:inset 0 0 0 0.5px rgba(0,0,0,.14), 0 0.5px 1.5px rgba(0,0,0,.22);"></div>
<div style="left:1593.2px;top:956.2px;width:15px;height:15px;background:#ffffff;border-radius:3.8px;box-shadow:inset 0 0 0 0.5px rgba(0,0,0,.14), 0 0.5px 1.5px rgba(0,0,0,.22);"></div>
<div style="left:1593.2px;top:980.0px;width:15px;height:15px;background:#ffffff;border-radius:3.8px;box-shadow:inset 0 0 0 0.5px rgba(0,0,0,.14), 0 0.5px 1.5px rgba(0,0,0,.22);"></div>
<svg style="left:1593.2px;top:1003.7px" width="15" height="15" viewBox="1593.2 1003.7 15 15"><rect x="1593.2" y="1003.7" width="15" height="15" rx="3.6" fill="#157af6"/><path d="M1596.8 1011.5 L1599.6000000000001 1014.5 L1604.4 1007.7" fill="none" stroke="#fff" stroke-width="1.9" stroke-linecap="round" stroke-linejoin="round"/></svg>
<div style="left:1593.2px;top:1027.4px;width:15px;height:15px;background:#ffffff;border-radius:3.8px;box-shadow:inset 0 0 0 0.5px rgba(0,0,0,.14), 0 0.5px 1.5px rgba(0,0,0,.22);"></div>
<div style="left:1593.2px;top:1051.2px;width:15px;height:15px;background:#ffffff;border-radius:3.8px;box-shadow:inset 0 0 0 0.5px rgba(0,0,0,.14), 0 0.5px 1.5px rgba(0,0,0,.22);"></div>
<div style="left:1593.2px;top:1074.9px;width:15px;height:15px;background:#ffffff;border-radius:3.8px;box-shadow:inset 0 0 0 0.5px rgba(0,0,0,.14), 0 0.5px 1.5px rgba(0,0,0,.22);"></div>
<div style="left:1757px;top:837.6px;width:15px;height:15px;background:#ffffff;border-radius:3.8px;box-shadow:inset 0 0 0 0.5px rgba(0,0,0,.14), 0 0.5px 1.5px rgba(0,0,0,.22);"></div>
<div style="left:1757px;top:861.4px;width:15px;height:15px;background:#ffffff;border-radius:3.8px;box-shadow:inset 0 0 0 0.5px rgba(0,0,0,.14), 0 0.5px 1.5px rgba(0,0,0,.22);"></div>
<div style="left:0px;top:1098px;width:1920px;height:2px;background:linear-gradient(180deg,rgba(0,0,0,0),rgba(0,0,0,.09));"></div>
<div class="txl">
<span class="t" style="top:84.75px;font-size:16px;color:#808084;font-weight:700;transform:skewX(0.2deg) scaleX(1.0229);left:1490.03px;">Custom Class</span>
<span class="t r" style="top:120.75px;font-size:13.4px;color:#2a2a2c;transform:skewX(0.2deg) scaleX(1.0296);right:334.00px;">Class</span>
<span class="t" style="top:119.25px;font-size:13.9px;color:#2a2a2c;transform:skewX(0.2deg) scaleX(1.0900);letter-spacing:0.190px;left:1597.63px;">WechatLoginButton</span>
<span class="t r" style="top:149.75px;font-size:13.4px;color:#2a2a2c;transform:skewX(0.2deg) scaleX(1.0900);letter-spacing:0.008px;right:333.84px;">Module</span>
<span class="t" style="top:148.25px;font-size:13.9px;color:#2a2a2c;transform:skewX(0.2deg) scaleX(1.0754);left:1597.63px;">Wechat</span>
<span class="t" style="top:176.25px;font-size:13.9px;color:#2a2a2c;transform:skewX(0.2deg) scaleX(1.0900);letter-spacing:0.145px;left:1611.90px;">Inherit Module From Target</span>
<span class="t" style="top:221.75px;font-size:16px;color:#808084;font-weight:700;transform:skewX(0.2deg) scaleX(1.0801);left:1489.54px;">Identity</span>
<span class="t r" style="top:258.75px;font-size:13.4px;color:#2a2a2c;transform:skewX(0.2deg) scaleX(1.0631);right:333.82px;">Restoration ID</span>
<span class="t" style="top:303.75px;font-size:16px;color:#808084;font-weight:700;transform:skewX(0.2deg) scaleX(1.0500);left:1489.69px;">User Defined Runtime Attributes</span>
<span class="t" style="top:341.25px;font-size:13.9px;color:#2a2a2c;transform:skewX(0.2deg) scaleX(1.0900);letter-spacing:0.032px;left:1505.26px;">Key Path</span>
<span class="t" style="top:341.25px;font-size:13.9px;color:#2a2a2c;transform:skewX(0.2deg) scaleX(1.0743);left:1596.16px;">Type</span>
<span class="t" style="top:341.25px;font-size:13.9px;color:#2a2a2c;transform:skewX(0.2deg) scaleX(1.0553);left:1685.94px;">Value</span>
<span class="t" style="top:477.75px;font-size:16px;color:#808084;font-weight:700;transform:skewX(0.2deg) scaleX(1.0369);left:1489.59px;">Document</span>
<span class="t r" style="top:514.75px;font-size:13.4px;color:#2a2a2c;transform:skewX(0.2deg) scaleX(1.0815);right:333.53px;">Label</span>
<span class="t" style="top:514.25px;font-size:13.9px;color:#c2c2c6;transform:skewX(0.2deg) scaleX(1.0900);letter-spacing:0.215px;left:1597.16px;">Xcode Specific Label</span>
<span class="t r" style="top:569.75px;font-size:13.4px;color:#2a2a2c;transform:skewX(0.2deg) scaleX(1.0756);right:333.81px;">Object ID</span>
<span class="t" style="top:569.25px;font-size:13.9px;color:#2a2a2c;transform:skewX(0.2deg) scaleX(1.0900);letter-spacing:0.364px;left:1594.36px;">qoz-8Y-ugC</span>
<span class="t r" style="top:597.75px;font-size:13.4px;color:#2a2a2c;transform:skewX(0.2deg) scaleX(1.0725);right:334.52px;">Lock</span>
<span class="t" style="top:596.25px;font-size:13.9px;color:#2a2a2c;transform:skewX(0.2deg) scaleX(1.0900);letter-spacing:0.408px;left:1600.00px;">Inherited - (Nothing)</span>
<span class="t r" style="top:626.75px;font-size:13.4px;color:#2a2a2c;transform:skewX(0.2deg) scaleX(1.0828);right:334.39px;">Localizer Hint</span>
<span class="t" style="top:626.25px;font-size:13.9px;color:#c2c2c6;transform:skewX(0.2deg) scaleX(1.0900);letter-spacing:0.118px;left:1596.73px;">Comment For Localizer</span>
<span class="t" style="top:671.75px;font-size:16px;color:#808084;font-weight:700;transform:skewX(0.2deg) scaleX(1.0273);left:1490.29px;">Accessibility</span>
<span class="t r" style="top:704.75px;font-size:13.4px;color:#2a2a2c;transform:skewX(0.2deg) scaleX(1.0820);right:334.47px;">Accessibility</span>
<span class="t" style="top:704.25px;font-size:13.9px;color:#2a2a2c;transform:skewX(0.2deg) scaleX(1.0900);letter-spacing:0.171px;left:1613.76px;">Enabled</span>
<span class="t r" style="top:732.75px;font-size:13.4px;color:#2a2a2c;transform:skewX(0.2deg) scaleX(1.0815);right:333.53px;">Label</span>
<span class="t" style="top:732.25px;font-size:13.9px;color:#c2c2c6;transform:skewX(0.2deg) scaleX(1.0900);letter-spacing:0.455px;left:1596.66px;">Label</span>
<span class="t r" style="top:762.75px;font-size:13.4px;color:#2a2a2c;transform:skewX(0.2deg) scaleX(1.0900);letter-spacing:0.132px;right:334.25px;">Hint</span>
<span class="t" style="top:762.25px;font-size:13.9px;color:#c2c2c6;transform:skewX(0.2deg) scaleX(1.0900);letter-spacing:0.493px;left:1596.66px;">Hint</span>
<span class="t r" style="top:793.75px;font-size:13.4px;color:#2a2a2c;transform:skewX(0.2deg) scaleX(1.0900);letter-spacing:0.221px;right:334.02px;">Identifier</span>
<span class="t" style="top:793.25px;font-size:13.9px;color:#c2c2c6;transform:skewX(0.2deg) scaleX(1.0900);letter-spacing:0.483px;left:1596.50px;">Identifier</span>
<span class="t r" style="top:825.75px;font-size:13.4px;color:#2a2a2c;transform:skewX(0.2deg) scaleX(1.0423);right:334.00px;">Traits</span>
<span class="t" style="top:825.25px;font-size:13.9px;color:#2a2a2c;transform:skewX(0.2deg) scaleX(1.0900);letter-spacing:0.628px;left:1613.76px;">Button</span>
<span class="t" style="top:849.25px;font-size:13.9px;color:#2a2a2c;transform:skewX(0.2deg) scaleX(1.0900);letter-spacing:0.335px;left:1613.60px;">Image</span>
<span class="t" style="top:873.25px;font-size:13.9px;color:#2a2a2c;transform:skewX(0.2deg) scaleX(1.0900);letter-spacing:0.140px;left:1614.31px;">Static Text</span>
<span class="t" style="top:896.25px;font-size:13.9px;color:#2a2a2c;transform:skewX(0.2deg) scaleX(1.0900);letter-spacing:0.076px;left:1614.31px;">Search Field</span>
<span class="t" style="top:920.25px;font-size:13.9px;color:#2a2a2c;transform:skewX(0.2deg) scaleX(1.0900);letter-spacing:0.078px;left:1613.76px;">Plays Sound</span>
<span class="t" style="top:944.25px;font-size:13.9px;color:#2a2a2c;transform:skewX(0.2deg) scaleX(1.0900);letter-spacing:0.016px;left:1613.76px;">Keyboard Key</span>
<span class="t" style="top:968.25px;font-size:13.9px;color:#2a2a2c;transform:skewX(0.2deg) scaleX(1.0900);letter-spacing:0.019px;left:1614.31px;">Summary Element</span>
<span class="t" style="top:992.25px;font-size:13.9px;color:#2a2a2c;transform:skewX(0.2deg) scaleX(1.0900);letter-spacing:0.223px;left:1613.83px;">User Interaction Enabled</span>
<span class="t" style="top:1015.25px;font-size:13.9px;color:#2a2a2c;transform:skewX(0.2deg) scaleX(1.0900);letter-spacing:0.247px;left:1613.83px;">Updates Frequently</span>
<span class="t" style="top:1039.25px;font-size:13.9px;color:#2a2a2c;transform:skewX(0.2deg) scaleX(1.0900);letter-spacing:0.175px;left:1614.31px;">Starts Media Session</span>
<span class="t" style="top:1063.25px;font-size:13.9px;color:#2a2a2c;transform:skewX(0.2deg) scaleX(1.0900);letter-spacing:0.199px;left:1614.97px;">Adjustable</span>
<span class="t" style="top:825.25px;font-size:13.9px;color:#2a2a2c;transform:skewX(0.2deg) scaleX(1.0900);letter-spacing:0.375px;left:1777.06px;">Link</span>
<span class="t" style="top:849.25px;font-size:13.9px;color:#2a2a2c;transform:skewX(0.2deg) scaleX(1.0900);letter-spacing:0.354px;left:1777.61px;">Selected</span>
</div>
</aside>
<div id="frame" class="g" aria-label="Window frame">
<div style="left:0px;top:0px;width:1920px;height:1px;background:rgba(255,255,255,.55);"></div>
<svg style="left:0;top:0" width="1920" height="1100" viewBox="0 0 1920 1100">
<path d="M0 0 H13 A13 14 0 0 0 0 14 Z" fill="#17161b"/>
<path d="M0 1100 V1086 A14 14 0 0 0 14 1100 Z" fill="#0c0c0e"/>
<path d="M1920 0 V11 A15 11 0 0 0 1905 0 Z" fill="#2a1278"/>
<path d="M1920 1100 H1906 A14 15 0 0 0 1920 1085 Z" fill="#b9b8bd"/>
</svg>
</div>
</div></body></html>
